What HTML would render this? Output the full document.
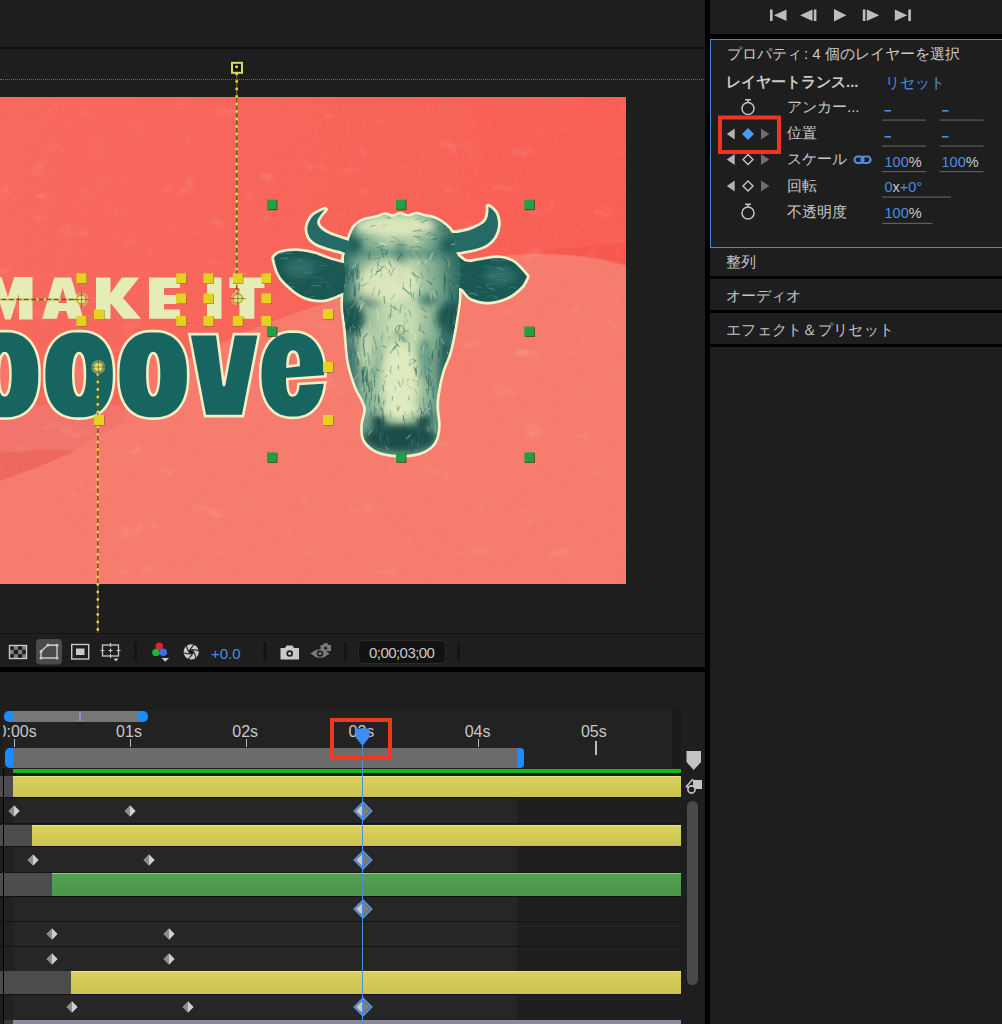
<!DOCTYPE html>
<html><head><meta charset="utf-8">
<style>
html,body{margin:0;padding:0}
body{width:1002px;height:1024px;background:#1e1e1e;position:relative;overflow:hidden;font-family:"Liberation Sans",sans-serif;color:#c4c4c4}
.a{position:absolute}
.blk{position:absolute;background:#000}
.t{position:absolute;white-space:nowrap;line-height:1}
</style></head><body>
<div class="blk" style="left:0;top:46.5px;width:705px;height:2.5px;background:#0e0e0e"></div>
<div class="blk" style="left:705px;top:0;width:5px;height:1024px;background:#000"></div>
<div class="blk" style="left:710px;top:34px;width:292px;height:5px;background:#000"></div>
<div class="a" style="left:0;top:79px;width:704px;height:0;border-top:1px dotted #6a6a6a"></div>
<div class="a" style="left:0;top:633px;width:705px;height:1px;background:#111"></div>
<div class="blk" style="left:0;top:667px;width:705px;height:5px"></div>
<div class="a" style="left:710px;top:39px;width:300px;height:208.5px;border:1.5px solid #4a86d4;box-sizing:border-box"></div>
<div class="blk" style="left:710px;top:276px;width:292px;height:3px"></div>
<div class="blk" style="left:710px;top:310px;width:292px;height:3px"></div>
<div class="blk" style="left:710px;top:344px;width:292px;height:3px"></div>
<svg class="a" style="left:0;top:97px" width="626" height="487" viewBox="0 97 626 487">
<defs><linearGradient id="bgTop" x1="0" y1="0" x2="1" y2="0"><stop offset="0" stop-color="#f8695d"/><stop offset="1" stop-color="#f85e54"/></linearGradient></defs>
<rect x="0" y="97" width="626" height="487" fill="#f67b6d"/>
<path d="M0 97 H626 V264 C600 258 570 252 527 254 C490 256 460 262 420 272 C380 284 340 298 270 322 C230 338 190 356 160 376 C130 396 100 430 75 451 C50 462 25 472 0 481 Z" fill="url(#bgTop)"/>
<path d="M0 405 H150 C130 420 100 432 75 451 L0 453 Z" fill="#f1736a"/>
<path d="M0 453 C25 450 50 449 75 451 C50 462 25 472 0 481 Z" fill="#ee675d"/>
<path d="M516 254 C560 248 600 246 626 242 V266 C600 258 560 252 516 254 Z" fill="#f5544c" opacity="0.6"/>
<filter id="grain" x="0" y="0" width="100%" height="100%"><feTurbulence type="fractalNoise" baseFrequency="0.8" numOctaves="2" seed="4" result="n"/><feColorMatrix in="n" type="matrix" values="0 0 0 0 1  0 0 0 0 1  0 0 0 0 1  1.2 0 0 0 -0.55"/></filter>
<filter id="blot" x="0" y="0" width="100%" height="100%"><feTurbulence type="fractalNoise" baseFrequency="0.035 0.05" numOctaves="4" seed="11" result="n"/><feColorMatrix in="n" type="matrix" values="0 0 0 0 1  0 0 0 0 0.95  0 0 0 0 0.85  4 0 0 0 -2.7"/></filter>
<rect x="0" y="97" width="626" height="487" filter="url(#grain)" opacity="0.10"/>
<rect x="0" y="97" width="626" height="487" filter="url(#blot)" opacity="0.12"/>
<g fill="#e6ecb6">
<path d="M-16.7 319.4 V277 H1.6 L7.9 297 L14.2 277 H32.5 V319.4 H19 V293.6 L10.7 319.4 H5.1 L-3.2 293.6 V319.4 Z"/>
<path fill-rule="evenodd" d="M42.1 318.8 L54.2 277.5 H71.2 L83.3 318.8 H68.6 L66.3 311 H59.1 L56.8 318.8 Z M62.7 288 L58.3 303 H67.1 Z"/>
<path d="M96 277.5 H110.5 V293.5 L121.7 277.5 H139.3 L123 298 L141 318.8 H123.4 L110.5 303 V318.8 H96 Z"/>
<path d="M149 277.5 H180 V288 H164 V295 H177 V304 H164 V309.5 H180 V318.8 H149 Z"/>
<rect x="207" y="277.5" width="14.5" height="41.3"/>
<path d="M229.4 277.5 H264.4 V288 H254.4 V318.8 H239.4 V288 H229.4 Z"/>
</g>
<g stroke="#f4efc4" stroke-width="2.6">
<path d="M39.60 374.80 L39.49 380.53 L39.16 384.98 L38.60 389.00 L37.83 392.71 L36.85 396.17 L35.65 399.38 L34.24 402.36 L32.63 405.11 L30.82 407.61 L28.82 409.88 L26.62 411.89 L24.24 413.65 L21.67 415.15 L18.91 416.39 L15.95 417.35 L12.74 418.04 L9.18 418.46 L4.60 418.60 L0.02 418.46 L-3.54 418.04 L-6.75 417.35 L-9.71 416.39 L-12.47 415.15 L-15.04 413.65 L-17.42 411.89 L-19.62 409.88 L-21.62 407.61 L-23.43 405.11 L-25.04 402.36 L-26.45 399.38 L-27.65 396.17 L-28.63 392.71 L-29.40 389.00 L-29.96 384.98 L-30.29 380.53 L-30.40 374.80 L-30.29 369.07 L-29.96 364.62 L-29.40 360.60 L-28.63 356.89 L-27.65 353.43 L-26.45 350.22 L-25.04 347.24 L-23.43 344.49 L-21.62 341.99 L-19.62 339.72 L-17.42 337.71 L-15.04 335.95 L-12.47 334.45 L-9.71 333.21 L-6.75 332.25 L-3.54 331.56 L0.02 331.14 L4.60 331.00 L9.18 331.14 L12.74 331.56 L15.95 332.25 L18.91 333.21 L21.67 334.45 L24.24 335.95 L26.62 337.71 L28.82 339.72 L30.82 341.99 L32.63 344.49 L34.24 347.24 L35.65 350.22 L36.85 353.43 L37.83 356.89 L38.60 360.60 L39.16 364.62 L39.49 369.07 Z" fill="#176561"/>
<path d="M10.40 374.20 L10.38 376.50 L10.32 378.50 L10.22 380.38 L10.08 382.16 L9.90 383.84 L9.69 385.44 L9.44 386.93 L9.15 388.32 L8.83 389.60 L8.48 390.76 L8.10 391.80 L7.69 392.71 L7.25 393.49 L6.79 394.14 L6.30 394.65 L5.78 395.01 L5.23 395.23 L4.60 395.30 L3.97 395.23 L3.42 395.01 L2.90 394.65 L2.41 394.14 L1.95 393.49 L1.51 392.71 L1.10 391.80 L0.72 390.76 L0.37 389.60 L0.05 388.32 L-0.24 386.93 L-0.49 385.44 L-0.70 383.84 L-0.88 382.16 L-1.02 380.38 L-1.12 378.50 L-1.18 376.50 L-1.20 374.20 L-1.18 371.90 L-1.12 369.90 L-1.02 368.02 L-0.88 366.24 L-0.70 364.56 L-0.49 362.96 L-0.24 361.47 L0.05 360.08 L0.37 358.80 L0.72 357.64 L1.10 356.60 L1.51 355.69 L1.95 354.91 L2.41 354.26 L2.90 353.75 L3.42 353.39 L3.97 353.17 L4.60 353.10 L5.23 353.17 L5.78 353.39 L6.30 353.75 L6.79 354.26 L7.25 354.91 L7.69 355.69 L8.10 356.60 L8.48 357.64 L8.83 358.80 L9.15 360.08 L9.44 361.47 L9.69 362.96 L9.90 364.56 L10.08 366.24 L10.22 368.02 L10.32 369.90 L10.38 371.90 Z" fill="#f7786a"/>
<path d="M114.10 374.80 L113.99 380.53 L113.66 384.98 L113.10 389.00 L112.33 392.71 L111.35 396.17 L110.15 399.38 L108.74 402.36 L107.13 405.11 L105.32 407.61 L103.32 409.88 L101.12 411.89 L98.74 413.65 L96.17 415.15 L93.41 416.39 L90.45 417.35 L87.24 418.04 L83.68 418.46 L79.10 418.60 L74.52 418.46 L70.96 418.04 L67.75 417.35 L64.79 416.39 L62.03 415.15 L59.46 413.65 L57.08 411.89 L54.88 409.88 L52.88 407.61 L51.07 405.11 L49.46 402.36 L48.05 399.38 L46.85 396.17 L45.87 392.71 L45.10 389.00 L44.54 384.98 L44.21 380.53 L44.10 374.80 L44.21 369.07 L44.54 364.62 L45.10 360.60 L45.87 356.89 L46.85 353.43 L48.05 350.22 L49.46 347.24 L51.07 344.49 L52.88 341.99 L54.88 339.72 L57.08 337.71 L59.46 335.95 L62.03 334.45 L64.79 333.21 L67.75 332.25 L70.96 331.56 L74.52 331.14 L79.10 331.00 L83.68 331.14 L87.24 331.56 L90.45 332.25 L93.41 333.21 L96.17 334.45 L98.74 335.95 L101.12 337.71 L103.32 339.72 L105.32 341.99 L107.13 344.49 L108.74 347.24 L110.15 350.22 L111.35 353.43 L112.33 356.89 L113.10 360.60 L113.66 364.62 L113.99 369.07 Z" fill="#176561"/>
<path d="M84.90 374.20 L84.88 376.50 L84.82 378.50 L84.72 380.38 L84.58 382.16 L84.40 383.84 L84.19 385.44 L83.94 386.93 L83.65 388.32 L83.33 389.60 L82.98 390.76 L82.60 391.80 L82.19 392.71 L81.75 393.49 L81.29 394.14 L80.80 394.65 L80.28 395.01 L79.73 395.23 L79.10 395.30 L78.47 395.23 L77.92 395.01 L77.40 394.65 L76.91 394.14 L76.45 393.49 L76.01 392.71 L75.60 391.80 L75.22 390.76 L74.87 389.60 L74.55 388.32 L74.26 386.93 L74.01 385.44 L73.80 383.84 L73.62 382.16 L73.48 380.38 L73.38 378.50 L73.32 376.50 L73.30 374.20 L73.32 371.90 L73.38 369.90 L73.48 368.02 L73.62 366.24 L73.80 364.56 L74.01 362.96 L74.26 361.47 L74.55 360.08 L74.87 358.80 L75.22 357.64 L75.60 356.60 L76.01 355.69 L76.45 354.91 L76.91 354.26 L77.40 353.75 L77.92 353.39 L78.47 353.17 L79.10 353.10 L79.73 353.17 L80.28 353.39 L80.80 353.75 L81.29 354.26 L81.75 354.91 L82.19 355.69 L82.60 356.60 L82.98 357.64 L83.33 358.80 L83.65 360.08 L83.94 361.47 L84.19 362.96 L84.40 364.56 L84.58 366.24 L84.72 368.02 L84.82 369.90 L84.88 371.90 Z" fill="#f7786a"/>
<path d="M188.20 374.80 L188.09 380.53 L187.76 384.98 L187.20 389.00 L186.43 392.71 L185.45 396.17 L184.25 399.38 L182.84 402.36 L181.23 405.11 L179.42 407.61 L177.42 409.88 L175.22 411.89 L172.84 413.65 L170.27 415.15 L167.51 416.39 L164.55 417.35 L161.34 418.04 L157.78 418.46 L153.20 418.60 L148.62 418.46 L145.06 418.04 L141.85 417.35 L138.89 416.39 L136.13 415.15 L133.56 413.65 L131.18 411.89 L128.98 409.88 L126.98 407.61 L125.17 405.11 L123.56 402.36 L122.15 399.38 L120.95 396.17 L119.97 392.71 L119.20 389.00 L118.64 384.98 L118.31 380.53 L118.20 374.80 L118.31 369.07 L118.64 364.62 L119.20 360.60 L119.97 356.89 L120.95 353.43 L122.15 350.22 L123.56 347.24 L125.17 344.49 L126.98 341.99 L128.98 339.72 L131.18 337.71 L133.56 335.95 L136.13 334.45 L138.89 333.21 L141.85 332.25 L145.06 331.56 L148.62 331.14 L153.20 331.00 L157.78 331.14 L161.34 331.56 L164.55 332.25 L167.51 333.21 L170.27 334.45 L172.84 335.95 L175.22 337.71 L177.42 339.72 L179.42 341.99 L181.23 344.49 L182.84 347.24 L184.25 350.22 L185.45 353.43 L186.43 356.89 L187.20 360.60 L187.76 364.62 L188.09 369.07 Z" fill="#176561"/>
<path d="M159.00 374.20 L158.98 376.50 L158.92 378.50 L158.82 380.38 L158.68 382.16 L158.50 383.84 L158.29 385.44 L158.04 386.93 L157.75 388.32 L157.43 389.60 L157.08 390.76 L156.70 391.80 L156.29 392.71 L155.85 393.49 L155.39 394.14 L154.90 394.65 L154.38 395.01 L153.83 395.23 L153.20 395.30 L152.57 395.23 L152.02 395.01 L151.50 394.65 L151.01 394.14 L150.55 393.49 L150.11 392.71 L149.70 391.80 L149.32 390.76 L148.97 389.60 L148.65 388.32 L148.36 386.93 L148.11 385.44 L147.90 383.84 L147.72 382.16 L147.58 380.38 L147.48 378.50 L147.42 376.50 L147.40 374.20 L147.42 371.90 L147.48 369.90 L147.58 368.02 L147.72 366.24 L147.90 364.56 L148.11 362.96 L148.36 361.47 L148.65 360.08 L148.97 358.80 L149.32 357.64 L149.70 356.60 L150.11 355.69 L150.55 354.91 L151.01 354.26 L151.50 353.75 L152.02 353.39 L152.57 353.17 L153.20 353.10 L153.83 353.17 L154.38 353.39 L154.90 353.75 L155.39 354.26 L155.85 354.91 L156.29 355.69 L156.70 356.60 L157.08 357.64 L157.43 358.80 L157.75 360.08 L158.04 361.47 L158.29 362.96 L158.50 364.56 L158.68 366.24 L158.82 368.02 L158.92 369.90 L158.98 371.90 Z" fill="#f7786a"/>
<path d="M189.3 334.1 H217.2 L223.9 386 L233.8 334.1 H259 L243 416.1 H205 Z" fill="#176561"/>
<path d="M325.40 374.70 L325.29 379.88 L324.97 384.13 L324.43 388.04 L323.68 391.69 L322.73 395.13 L321.57 398.34 L320.21 401.34 L318.66 404.12 L316.92 406.66 L315.00 408.96 L312.90 411.02 L310.64 412.82 L308.22 414.36 L305.62 415.63 L302.86 416.62 L299.91 417.33 L296.71 417.76 L292.80 417.90 L288.89 417.76 L285.69 417.33 L282.74 416.62 L279.98 415.63 L277.38 414.36 L274.96 412.82 L272.70 411.02 L270.60 408.96 L268.68 406.66 L266.94 404.12 L265.39 401.34 L264.03 398.34 L262.87 395.13 L261.92 391.69 L261.17 388.04 L260.63 384.13 L260.31 379.88 L260.20 374.70 L260.31 369.52 L260.63 365.27 L261.17 361.36 L261.92 357.71 L262.87 354.27 L264.03 351.06 L265.39 348.06 L266.94 345.28 L268.68 342.74 L270.60 340.44 L272.70 338.38 L274.96 336.58 L277.38 335.04 L279.98 333.77 L282.74 332.78 L285.69 332.07 L288.89 331.64 L292.80 331.50 L296.71 331.64 L299.91 332.07 L302.86 332.78 L305.62 333.77 L308.22 335.04 L310.64 336.58 L312.90 338.38 L315.00 340.44 L316.92 342.74 L318.66 345.28 L320.21 348.06 L321.57 351.06 L322.73 354.27 L323.68 357.71 L324.43 361.36 L324.97 365.27 L325.29 369.52 Z" fill="#176561"/>
<path d="M287.5 366.5 C287.5 356 290 351.6 293 351.6 C296.2 351.6 298.6 356 298.6 365 Z" fill="#f7786a"/>
</g>
<clipPath id="eclip"><path d="M326.80 374.70 L326.69 380.03 L326.35 384.41 L325.79 388.44 L325.01 392.21 L324.01 395.74 L322.80 399.06 L321.39 402.14 L319.77 405.00 L317.95 407.62 L315.95 409.99 L313.77 412.11 L311.41 413.97 L308.88 415.55 L306.18 416.86 L303.30 417.88 L300.22 418.61 L296.87 419.05 L292.80 419.20 L288.73 419.05 L285.38 418.61 L282.30 417.88 L279.42 416.86 L276.72 415.55 L274.19 413.97 L271.83 412.11 L269.65 409.99 L267.65 407.62 L265.83 405.00 L264.21 402.14 L262.80 399.06 L261.59 395.74 L260.59 392.21 L259.81 388.44 L259.25 384.41 L258.91 380.03 L258.80 374.70 L258.91 369.37 L259.25 364.99 L259.81 360.96 L260.59 357.19 L261.59 353.66 L262.80 350.34 L264.21 347.26 L265.83 344.40 L267.65 341.78 L269.65 339.41 L271.83 337.29 L274.19 335.43 L276.72 333.85 L279.42 332.54 L282.30 331.52 L285.38 330.79 L288.73 330.35 L292.80 330.20 L296.87 330.35 L300.22 330.79 L303.30 331.52 L306.18 332.54 L308.88 333.85 L311.41 335.43 L313.77 337.29 L315.95 339.41 L317.95 341.78 L319.77 344.40 L321.39 347.26 L322.80 350.34 L324.01 353.66 L325.01 357.19 L325.79 360.96 L326.35 364.99 L326.69 369.37 Z"/></clipPath>
<path clip-path="url(#eclip)" d="M287.3 379 L330 376 V382 L298.5 384 C298 392 295.5 395.5 292.5 395.5 C289 395.5 287.3 390 287.3 379 Z" fill="#f7786a" stroke="#f4efc4" stroke-width="2.6"/>
</svg>
<svg class="a" style="left:260px;top:195px" width="280" height="270" viewBox="260 195 280 270">
<defs><filter id="bl" x="-50%" y="-50%" width="200%" height="200%"><feGaussianBlur stdDeviation="3.5"/></filter><filter id="bl2" x="-50%" y="-50%" width="200%" height="200%"><feGaussianBlur stdDeviation="1.5"/></filter><clipPath id="fclip"><path d="M348.5 250.0 C357.5 244.0 382.5 240.0 400.0 240.0 C417.5 240.0 443.8 241.8 453.6 250.0 C463.4 258.2 458.6 278.2 459.0 289.3 C459.4 300.4 457.8 306.2 456.3 316.3 C454.8 326.4 452.4 340.7 450.0 350.0 C447.6 359.3 444.2 364.3 442.0 372.0 C439.8 379.7 437.9 389.7 437.0 396.0 C436.1 402.3 436.3 405.2 436.5 410.0 C436.7 414.8 438.1 420.3 438.0 425.0 C437.9 429.7 437.3 434.3 436.0 438.0 C434.7 441.7 433.0 444.5 430.0 447.0 C427.0 449.5 423.0 451.7 418.0 453.0 C413.0 454.3 406.0 455.1 400.0 455.0 C394.0 454.9 386.8 453.8 382.0 452.5 C377.2 451.2 374.0 449.4 371.0 447.0 C368.0 444.6 365.3 441.7 364.0 438.0 C362.7 434.3 362.7 429.7 363.0 425.0 C363.3 420.3 366.0 414.2 366.0 410.0 C366.0 405.8 364.7 404.0 363.0 400.0 C361.3 396.0 358.3 392.3 356.0 386.0 C353.7 379.7 350.7 371.4 349.0 362.0 C347.3 352.6 346.8 339.6 345.8 329.7 C344.8 319.8 343.0 311.8 343.0 302.8 C343.0 293.8 344.9 284.6 345.8 275.8 C346.7 267.0 339.5 256.0 348.5 250.0 Z"/><path d="M349.0 244.0 C347.8 240.0 351.5 233.1 353.0 229.8 C354.5 226.5 356.2 225.6 358.0 224.0 C359.8 222.4 361.8 221.3 364.0 220.5 C366.2 219.7 368.7 219.5 371.0 219.0 C373.3 218.5 375.7 218.2 378.0 217.5 C380.3 216.8 382.5 215.1 385.0 215.0 C387.5 214.9 390.5 217.1 393.0 217.0 C395.5 216.9 397.5 214.5 400.0 214.5 C402.5 214.5 405.3 217.0 408.0 217.0 C410.7 217.0 413.3 214.6 416.0 214.5 C418.7 214.4 421.3 215.9 424.0 216.5 C426.7 217.1 429.3 217.2 432.0 218.0 C434.7 218.8 437.5 220.0 440.0 221.5 C442.5 223.0 445.2 225.2 447.0 227.0 C448.8 228.8 449.7 229.2 451.0 232.0 C452.3 234.8 456.8 240.3 455.0 244.0 C453.2 247.7 449.2 252.7 440.0 254.0 C430.8 255.3 413.3 252.0 400.0 252.0 C386.7 252.0 368.5 255.3 360.0 254.0 C351.5 252.7 350.2 248.0 349.0 244.0 Z"/></clipPath><clipPath id="lclip"><path d="M350.4 264.5 C349.2 260.3 346.4 263.9 342.7 263.0 C339.0 262.1 333.4 260.6 328.4 259.0 C323.4 257.4 318.2 254.8 312.8 253.5 C307.4 252.2 301.5 251.1 296.0 251.0 C290.5 250.9 283.7 251.8 280.0 253.0 C276.3 254.2 274.0 258.0 274.0 258.0 C274.0 258.0 276.1 267.9 278.0 272.0 C279.9 276.1 281.5 278.9 285.6 282.8 C289.7 286.8 296.3 292.9 302.4 295.7 C308.5 298.5 315.7 300.1 322.0 299.8 C328.3 299.5 335.3 296.0 340.0 294.0 C344.7 292.0 348.3 292.9 350.0 288.0 C351.7 283.1 351.6 268.7 350.4 264.5 Z"/></clipPath><clipPath id="rclip"><path d="M452.0 254.0 C454.0 250.3 461.3 260.5 465.9 261.6 C470.5 262.7 474.3 261.0 479.7 260.4 C485.1 259.8 492.6 257.9 498.0 258.1 C503.4 258.3 508.0 259.7 511.8 261.6 C515.6 263.5 518.5 267.1 521.0 269.6 C523.5 272.1 527.0 276.5 527.0 276.5 C527.0 276.5 524.3 283.4 521.0 286.8 C517.7 290.2 512.5 294.6 507.2 297.1 C501.8 299.6 494.8 301.5 488.9 301.7 C483.0 301.9 476.0 300.4 471.6 298.3 C467.2 296.2 465.4 291.5 462.5 289.1 C459.6 286.7 455.8 289.9 454.0 284.0 C452.2 278.1 450.0 257.7 452.0 254.0 Z"/></clipPath></defs>
<g fill="#eef0c8" stroke="#eef0c8" stroke-width="5.5" stroke-linejoin="round">
<path d="M325.0 209.5 C325.0 209.5 316.4 212.8 313.5 215.5 C310.6 218.2 308.4 222.5 307.6 226.0 C306.9 229.5 307.7 233.5 309.0 236.3 C310.3 239.1 312.2 240.9 315.4 242.8 C318.6 244.8 323.8 246.5 328.4 248.0 C332.9 249.5 338.7 250.3 342.7 251.9 C346.7 253.5 350.3 257.8 352.5 257.5 C354.7 257.2 355.9 252.4 356.0 250.0 C356.1 247.6 355.2 244.7 353.0 242.8 C350.8 241.0 346.8 240.4 342.7 238.9 C338.6 237.4 332.3 235.6 328.4 233.7 C324.5 231.8 321.1 229.5 319.3 227.2 C317.5 224.9 316.6 222.9 317.5 220.0 C318.4 217.1 325.0 209.5 325.0 209.5 Z"/>
<path d="M488.5 206.5 C488.5 206.5 494.1 210.3 495.7 213.4 C497.3 216.5 498.2 221.0 498.0 224.8 C497.8 228.6 496.5 233.0 494.6 236.3 C492.7 239.6 489.9 242.3 486.6 244.4 C483.3 246.5 478.8 247.8 475.0 248.9 C471.2 250.0 467.0 250.6 463.6 251.2 C460.2 251.8 457.7 252.6 454.4 252.4 C451.1 252.2 445.1 253.1 444.0 250.0 C442.9 246.9 445.2 236.8 447.5 234.0 C449.8 231.2 453.9 233.7 457.9 232.9 C461.9 232.1 467.2 231.1 471.6 229.4 C476.0 227.7 481.6 224.9 484.3 222.5 C487.0 220.1 487.3 217.7 488.0 215.0 C488.7 212.3 488.5 206.5 488.5 206.5 Z"/>
<path d="M350.4 264.5 C349.2 260.3 346.4 263.9 342.7 263.0 C339.0 262.1 333.4 260.6 328.4 259.0 C323.4 257.4 318.2 254.8 312.8 253.5 C307.4 252.2 301.5 251.1 296.0 251.0 C290.5 250.9 283.7 251.8 280.0 253.0 C276.3 254.2 274.0 258.0 274.0 258.0 C274.0 258.0 276.1 267.9 278.0 272.0 C279.9 276.1 281.5 278.9 285.6 282.8 C289.7 286.8 296.3 292.9 302.4 295.7 C308.5 298.5 315.7 300.1 322.0 299.8 C328.3 299.5 335.3 296.0 340.0 294.0 C344.7 292.0 348.3 292.9 350.0 288.0 C351.7 283.1 351.6 268.7 350.4 264.5 Z"/>
<path d="M452.0 254.0 C454.0 250.3 461.3 260.5 465.9 261.6 C470.5 262.7 474.3 261.0 479.7 260.4 C485.1 259.8 492.6 257.9 498.0 258.1 C503.4 258.3 508.0 259.7 511.8 261.6 C515.6 263.5 518.5 267.1 521.0 269.6 C523.5 272.1 527.0 276.5 527.0 276.5 C527.0 276.5 524.3 283.4 521.0 286.8 C517.7 290.2 512.5 294.6 507.2 297.1 C501.8 299.6 494.8 301.5 488.9 301.7 C483.0 301.9 476.0 300.4 471.6 298.3 C467.2 296.2 465.4 291.5 462.5 289.1 C459.6 286.7 455.8 289.9 454.0 284.0 C452.2 278.1 450.0 257.7 452.0 254.0 Z"/>
<path d="M349.0 244.0 C347.8 240.0 351.5 233.1 353.0 229.8 C354.5 226.5 356.2 225.6 358.0 224.0 C359.8 222.4 361.8 221.3 364.0 220.5 C366.2 219.7 368.7 219.5 371.0 219.0 C373.3 218.5 375.7 218.2 378.0 217.5 C380.3 216.8 382.5 215.1 385.0 215.0 C387.5 214.9 390.5 217.1 393.0 217.0 C395.5 216.9 397.5 214.5 400.0 214.5 C402.5 214.5 405.3 217.0 408.0 217.0 C410.7 217.0 413.3 214.6 416.0 214.5 C418.7 214.4 421.3 215.9 424.0 216.5 C426.7 217.1 429.3 217.2 432.0 218.0 C434.7 218.8 437.5 220.0 440.0 221.5 C442.5 223.0 445.2 225.2 447.0 227.0 C448.8 228.8 449.7 229.2 451.0 232.0 C452.3 234.8 456.8 240.3 455.0 244.0 C453.2 247.7 449.2 252.7 440.0 254.0 C430.8 255.3 413.3 252.0 400.0 252.0 C386.7 252.0 368.5 255.3 360.0 254.0 C351.5 252.7 350.2 248.0 349.0 244.0 Z"/>
<path d="M348.5 250.0 C357.5 244.0 382.5 240.0 400.0 240.0 C417.5 240.0 443.8 241.8 453.6 250.0 C463.4 258.2 458.6 278.2 459.0 289.3 C459.4 300.4 457.8 306.2 456.3 316.3 C454.8 326.4 452.4 340.7 450.0 350.0 C447.6 359.3 444.2 364.3 442.0 372.0 C439.8 379.7 437.9 389.7 437.0 396.0 C436.1 402.3 436.3 405.2 436.5 410.0 C436.7 414.8 438.1 420.3 438.0 425.0 C437.9 429.7 437.3 434.3 436.0 438.0 C434.7 441.7 433.0 444.5 430.0 447.0 C427.0 449.5 423.0 451.7 418.0 453.0 C413.0 454.3 406.0 455.1 400.0 455.0 C394.0 454.9 386.8 453.8 382.0 452.5 C377.2 451.2 374.0 449.4 371.0 447.0 C368.0 444.6 365.3 441.7 364.0 438.0 C362.7 434.3 362.7 429.7 363.0 425.0 C363.3 420.3 366.0 414.2 366.0 410.0 C366.0 405.8 364.7 404.0 363.0 400.0 C361.3 396.0 358.3 392.3 356.0 386.0 C353.7 379.7 350.7 371.4 349.0 362.0 C347.3 352.6 346.8 339.6 345.8 329.7 C344.8 319.8 343.0 311.8 343.0 302.8 C343.0 293.8 344.9 284.6 345.8 275.8 C346.7 267.0 339.5 256.0 348.5 250.0 Z"/>
</g>
<g clip-path="url(#lclip)"></g>
<path d="M325.0 209.5 C325.0 209.5 316.4 212.8 313.5 215.5 C310.6 218.2 308.4 222.5 307.6 226.0 C306.9 229.5 307.7 233.5 309.0 236.3 C310.3 239.1 312.2 240.9 315.4 242.8 C318.6 244.8 323.8 246.5 328.4 248.0 C332.9 249.5 338.7 250.3 342.7 251.9 C346.7 253.5 350.3 257.8 352.5 257.5 C354.7 257.2 355.9 252.4 356.0 250.0 C356.1 247.6 355.2 244.7 353.0 242.8 C350.8 241.0 346.8 240.4 342.7 238.9 C338.6 237.4 332.3 235.6 328.4 233.7 C324.5 231.8 321.1 229.5 319.3 227.2 C317.5 224.9 316.6 222.9 317.5 220.0 C318.4 217.1 325.0 209.5 325.0 209.5 Z" fill="#266a66"/>
<path d="M488.5 206.5 C488.5 206.5 494.1 210.3 495.7 213.4 C497.3 216.5 498.2 221.0 498.0 224.8 C497.8 228.6 496.5 233.0 494.6 236.3 C492.7 239.6 489.9 242.3 486.6 244.4 C483.3 246.5 478.8 247.8 475.0 248.9 C471.2 250.0 467.0 250.6 463.6 251.2 C460.2 251.8 457.7 252.6 454.4 252.4 C451.1 252.2 445.1 253.1 444.0 250.0 C442.9 246.9 445.2 236.8 447.5 234.0 C449.8 231.2 453.9 233.7 457.9 232.9 C461.9 232.1 467.2 231.1 471.6 229.4 C476.0 227.7 481.6 224.9 484.3 222.5 C487.0 220.1 487.3 217.7 488.0 215.0 C488.7 212.3 488.5 206.5 488.5 206.5 Z" fill="#266a66"/>
<path d="M350.4 264.5 C349.2 260.3 346.4 263.9 342.7 263.0 C339.0 262.1 333.4 260.6 328.4 259.0 C323.4 257.4 318.2 254.8 312.8 253.5 C307.4 252.2 301.5 251.1 296.0 251.0 C290.5 250.9 283.7 251.8 280.0 253.0 C276.3 254.2 274.0 258.0 274.0 258.0 C274.0 258.0 276.1 267.9 278.0 272.0 C279.9 276.1 281.5 278.9 285.6 282.8 C289.7 286.8 296.3 292.9 302.4 295.7 C308.5 298.5 315.7 300.1 322.0 299.8 C328.3 299.5 335.3 296.0 340.0 294.0 C344.7 292.0 348.3 292.9 350.0 288.0 C351.7 283.1 351.6 268.7 350.4 264.5 Z" fill="#1b5753"/>
<path d="M452.0 254.0 C454.0 250.3 461.3 260.5 465.9 261.6 C470.5 262.7 474.3 261.0 479.7 260.4 C485.1 259.8 492.6 257.9 498.0 258.1 C503.4 258.3 508.0 259.7 511.8 261.6 C515.6 263.5 518.5 267.1 521.0 269.6 C523.5 272.1 527.0 276.5 527.0 276.5 C527.0 276.5 524.3 283.4 521.0 286.8 C517.7 290.2 512.5 294.6 507.2 297.1 C501.8 299.6 494.8 301.5 488.9 301.7 C483.0 301.9 476.0 300.4 471.6 298.3 C467.2 296.2 465.4 291.5 462.5 289.1 C459.6 286.7 455.8 289.9 454.0 284.0 C452.2 278.1 450.0 257.7 452.0 254.0 Z" fill="#1b5753"/>
<g clip-path="url(#lclip)" filter="url(#bl)"><ellipse cx="300" cy="268" rx="16" ry="9" fill="#2d6e67"/></g>
<g clip-path="url(#rclip)" filter="url(#bl)"><ellipse cx="500" cy="276" rx="16" ry="9" fill="#2d6e67"/></g>
<g clip-path="url(#fclip)">
<defs><radialGradient id="fg" cx="0.5" cy="0.45" r="0.6"><stop offset="0" stop-color="#ccdfb2"/><stop offset="0.55" stop-color="#a8c9a4"/><stop offset="1" stop-color="#4f8c7e"/></radialGradient></defs>
<rect x="330" y="205" width="140" height="260" fill="url(#fg)"/>
<defs><linearGradient id="sideg" x1="343" y1="0" x2="459" y2="0" gradientUnits="userSpaceOnUse"><stop offset="0" stop-color="#1f5c57" stop-opacity="0.8"/><stop offset="0.15" stop-color="#3a766c" stop-opacity="0.25"/><stop offset="0.4" stop-color="#3a766c" stop-opacity="0"/><stop offset="0.62" stop-color="#3a766c" stop-opacity="0"/><stop offset="0.82" stop-color="#2f6e66" stop-opacity="0.4"/><stop offset="1" stop-color="#1f5c57" stop-opacity="0.85"/></linearGradient></defs>
<rect x="330" y="215" width="140" height="250" fill="url(#sideg)"/>
<g filter="url(#bl)">
<rect x="352" y="248" width="96" height="10" fill="#3c7a70" opacity="0.55"/>
<ellipse cx="352" cy="245" rx="10" ry="9" fill="#1f5c57" opacity="0.9"/>
<ellipse cx="449" cy="245" rx="10" ry="9" fill="#1f5c57" opacity="0.9"/>
<ellipse cx="400" cy="262" rx="5" ry="24" fill="#3b7a70" opacity="0.6"/>
<ellipse cx="350" cy="318" rx="14" ry="16" fill="#1b5550" opacity="1"/>
<ellipse cx="451" cy="318" rx="14" ry="16" fill="#1b5550" opacity="1"/>
<ellipse cx="372" cy="300" rx="10" ry="6" fill="#2f6e66" opacity="0.7"/>
<ellipse cx="428" cy="300" rx="10" ry="6" fill="#2f6e66" opacity="0.7"/>
<ellipse cx="352" cy="370" rx="7" ry="30" fill="#2f6e66" opacity="0.55"/>
<ellipse cx="446" cy="368" rx="8" ry="36" fill="#1f5c57" opacity="0.8"/>
<ellipse cx="425" cy="360" rx="8" ry="22" fill="#4d8a7c" opacity="0.6"/>
<ellipse cx="375" cy="360" rx="6" ry="20" fill="#5d9686" opacity="0.5"/>
<ellipse cx="400" cy="438" rx="36" ry="14" fill="#1a4c48" opacity="1"/>
<ellipse cx="378" cy="421" rx="7" ry="6" fill="#153f3c" opacity="1"/>
<ellipse cx="424" cy="421" rx="7" ry="6" fill="#153f3c" opacity="1"/>
<ellipse cx="400" cy="342" rx="8" ry="10" fill="#5f9a88" opacity="0.55"/>
<ellipse cx="395" cy="226" rx="40" ry="11" fill="#e0eabd" opacity="0.9"/>
<ellipse cx="388" cy="282" rx="30" ry="20" fill="#e0eabd" opacity="0.85"/>
<ellipse cx="400" cy="380" rx="18" ry="40" fill="#e3ecc0" opacity="0.9"/>
<ellipse cx="401" cy="410" rx="22" ry="5" fill="#e3ecc0" opacity="0.95"/>
<ellipse cx="368" cy="350" rx="7" ry="20" fill="#d6e4b6" opacity="0.7"/>
</g>
<g stroke-linecap="round"><path d="M379.5 248.8 l6.7 1.5" stroke="#2a6a64" stroke-width="0.86" opacity="0.57"/><path d="M366.2 233.0 l5.5 0.2" stroke="#e4f0cc" stroke-width="0.77" opacity="0.27"/><path d="M409.0 443.2 l-0.7 6.7" stroke="#2a6a64" stroke-width="1.01" opacity="0.59"/><path d="M345.7 421.5 l-1.9 4.3" stroke="#2a6a64" stroke-width="0.70" opacity="0.45"/><path d="M408.4 378.4 l-0.9 3.5" stroke="#2a6a64" stroke-width="0.67" opacity="0.45"/><path d="M415.5 333.1 l-0.3 6.2" stroke="#e4f0cc" stroke-width="1.14" opacity="0.45"/><path d="M395.3 285.1 l-1.1 7.7" stroke="#e4f0cc" stroke-width="1.00" opacity="0.56"/><path d="M429.0 282.3 l-1.6 8.7" stroke="#e4f0cc" stroke-width="0.68" opacity="0.31"/><path d="M381.7 439.7 l0.5 5.5" stroke="#3c7c72" stroke-width="0.99" opacity="0.37"/><path d="M382.7 333.2 l-1.2 7.7" stroke="#2a6a64" stroke-width="0.65" opacity="0.58"/><path d="M397.8 374.1 l-0.8 3.3" stroke="#e4f0cc" stroke-width="1.30" opacity="0.35"/><path d="M387.1 375.2 l-2.2 2.3" stroke="#1f5c57" stroke-width="0.92" opacity="0.46"/><path d="M400.2 265.2 l-0.2 4.7" stroke="#e4f0cc" stroke-width="1.24" opacity="0.28"/><path d="M394.8 346.1 l-4.2 7.1" stroke="#3c7c72" stroke-width="1.17" opacity="0.50"/><path d="M460.3 378.6 l2.0 4.9" stroke="#1f5c57" stroke-width="0.71" opacity="0.25"/><path d="M441.4 256.5 l2.1 4.2" stroke="#3c7c72" stroke-width="0.70" opacity="0.46"/><path d="M378.9 242.6 l7.8 2.3" stroke="#e4f0cc" stroke-width="1.12" opacity="0.56"/><path d="M435.2 425.4 l-0.1 7.8" stroke="#e4f0cc" stroke-width="0.87" opacity="0.39"/><path d="M398.7 309.7 l2.1 3.6" stroke="#2a6a64" stroke-width="0.68" opacity="0.29"/><path d="M409.1 342.9 l0.0 8.7" stroke="#2a6a64" stroke-width="1.03" opacity="0.56"/><path d="M414.9 248.2 l4.5 -0.4" stroke="#e4f0cc" stroke-width="0.69" opacity="0.60"/><path d="M396.9 330.1 l1.3 3.3" stroke="#3c7c72" stroke-width="0.67" opacity="0.51"/><path d="M398.4 380.9 l2.0 5.8" stroke="#2a6a64" stroke-width="0.85" opacity="0.52"/><path d="M376.4 368.9 l3.1 1.8" stroke="#3c7c72" stroke-width="1.19" opacity="0.57"/><path d="M383.4 266.4 l-4.5 4.3" stroke="#1f5c57" stroke-width="1.03" opacity="0.53"/><path d="M439.8 392.5 l1.0 4.2" stroke="#3c7c72" stroke-width="0.96" opacity="0.51"/><path d="M460.7 404.8 l3.3 4.8" stroke="#3c7c72" stroke-width="0.84" opacity="0.58"/><path d="M384.5 265.8 l2.3 3.7" stroke="#1f5c57" stroke-width="0.74" opacity="0.42"/><path d="M460.2 360.9 l2.0 2.2" stroke="#2a6a64" stroke-width="1.05" opacity="0.57"/><path d="M435.4 395.0 l-0.2 5.9" stroke="#3c7c72" stroke-width="0.72" opacity="0.28"/><path d="M455.4 388.1 l1.8 5.5" stroke="#1f5c57" stroke-width="0.71" opacity="0.26"/><path d="M412.1 325.5 l-1.0 6.9" stroke="#e4f0cc" stroke-width="1.03" opacity="0.48"/><path d="M382.7 345.9 l3.6 1.3" stroke="#1f5c57" stroke-width="1.05" opacity="0.40"/><path d="M446.4 413.6 l1.6 3.9" stroke="#3c7c72" stroke-width="0.78" opacity="0.43"/><path d="M433.2 291.5 l1.8 6.0" stroke="#e4f0cc" stroke-width="1.12" opacity="0.48"/><path d="M439.4 338.1 l0.7 7.9" stroke="#1f5c57" stroke-width="1.21" opacity="0.44"/><path d="M403.9 216.6 l5.6 0.1" stroke="#1f5c57" stroke-width="1.16" opacity="0.30"/><path d="M415.5 241.4 l3.4 0.2" stroke="#e4f0cc" stroke-width="1.08" opacity="0.52"/><path d="M352.9 348.7 l-1.9 4.1" stroke="#2a6a64" stroke-width="0.96" opacity="0.52"/><path d="M451.3 320.2 l6.1 2.7" stroke="#1f5c57" stroke-width="0.95" opacity="0.49"/><path d="M395.2 342.1 l3.8 4.5" stroke="#3c7c72" stroke-width="1.21" opacity="0.57"/><path d="M448.9 261.4 l0.1 5.7" stroke="#e4f0cc" stroke-width="0.89" opacity="0.40"/><path d="M348.9 270.7 l-2.3 2.6" stroke="#1f5c57" stroke-width="1.23" opacity="0.58"/><path d="M418.5 301.3 l-2.8 3.6" stroke="#e4f0cc" stroke-width="0.70" opacity="0.33"/><path d="M456.2 309.2 l5.7 1.7" stroke="#e4f0cc" stroke-width="0.71" opacity="0.60"/><path d="M389.3 314.8 l-0.6 5.1" stroke="#3c7c72" stroke-width="0.66" opacity="0.26"/><path d="M407.6 319.5 l-0.9 3.0" stroke="#2a6a64" stroke-width="0.96" opacity="0.29"/><path d="M452.1 267.8 l6.6 5.0" stroke="#3c7c72" stroke-width="0.66" opacity="0.26"/><path d="M435.0 278.0 l-2.6 2.7" stroke="#3c7c72" stroke-width="1.17" opacity="0.39"/><path d="M405.5 337.6 l3.1 5.1" stroke="#3c7c72" stroke-width="0.83" opacity="0.27"/><path d="M424.0 315.8 l2.5 2.4" stroke="#2a6a64" stroke-width="1.16" opacity="0.46"/><path d="M367.1 276.5 l-1.7 3.3" stroke="#e4f0cc" stroke-width="0.61" opacity="0.57"/><path d="M372.7 243.5 l6.1 -0.5" stroke="#2a6a64" stroke-width="0.71" opacity="0.31"/><path d="M453.7 365.4 l3.3 5.2" stroke="#e4f0cc" stroke-width="0.74" opacity="0.43"/><path d="M361.7 296.7 l-0.7 3.0" stroke="#1f5c57" stroke-width="1.11" opacity="0.43"/><path d="M370.0 321.1 l-0.6 6.9" stroke="#e4f0cc" stroke-width="1.06" opacity="0.44"/><path d="M448.4 448.8 l1.7 4.5" stroke="#1f5c57" stroke-width="0.74" opacity="0.39"/><path d="M382.4 225.3 l3.8 0.5" stroke="#3c7c72" stroke-width="0.65" opacity="0.40"/><path d="M346.8 374.3 l-5.3 -0.4" stroke="#3c7c72" stroke-width="1.02" opacity="0.27"/><path d="M362.6 277.6 l-0.8 2.9" stroke="#3c7c72" stroke-width="0.85" opacity="0.59"/><path d="M406.7 271.6 l-1.2 8.7" stroke="#e4f0cc" stroke-width="0.60" opacity="0.28"/><path d="M374.0 372.1 l1.2 4.3" stroke="#2a6a64" stroke-width="1.14" opacity="0.34"/><path d="M350.9 309.5 l0.4 3.2" stroke="#1f5c57" stroke-width="0.76" opacity="0.48"/><path d="M427.4 426.5 l1.2 5.2" stroke="#e4f0cc" stroke-width="0.83" opacity="0.30"/><path d="M428.3 368.9 l2.1 2.5" stroke="#1f5c57" stroke-width="1.04" opacity="0.57"/><path d="M431.8 350.7 l-5.2 5.9" stroke="#1f5c57" stroke-width="0.61" opacity="0.28"/><path d="M345.1 367.5 l-5.8 6.6" stroke="#2a6a64" stroke-width="0.64" opacity="0.47"/><path d="M423.0 331.4 l1.5 2.6" stroke="#2a6a64" stroke-width="1.16" opacity="0.48"/><path d="M348.1 391.8 l0.2 4.5" stroke="#1f5c57" stroke-width="1.11" opacity="0.33"/><path d="M419.3 324.3 l2.3 7.7" stroke="#3c7c72" stroke-width="0.65" opacity="0.52"/><path d="M415.3 368.8 l1.1 3.3" stroke="#3c7c72" stroke-width="1.12" opacity="0.47"/><path d="M356.3 329.7 l0.3 5.9" stroke="#2a6a64" stroke-width="1.28" opacity="0.49"/><path d="M422.4 283.0 l-2.4 5.6" stroke="#1f5c57" stroke-width="0.68" opacity="0.36"/><path d="M350.5 327.4 l-0.8 4.7" stroke="#e4f0cc" stroke-width="0.65" opacity="0.60"/><path d="M387.2 435.6 l1.0 8.5" stroke="#3c7c72" stroke-width="1.12" opacity="0.58"/><path d="M356.2 412.1 l-1.0 6.0" stroke="#3c7c72" stroke-width="1.22" opacity="0.33"/><path d="M449.5 330.6 l2.4 2.0" stroke="#3c7c72" stroke-width="0.92" opacity="0.50"/><path d="M390.8 303.8 l-0.2 3.7" stroke="#3c7c72" stroke-width="0.83" opacity="0.51"/><path d="M442.4 241.3 l8.6 0.0" stroke="#3c7c72" stroke-width="0.80" opacity="0.27"/><path d="M387.6 424.3 l-3.1 1.5" stroke="#3c7c72" stroke-width="1.25" opacity="0.55"/><path d="M374.2 224.6 l6.9 -1.2" stroke="#e4f0cc" stroke-width="1.28" opacity="0.43"/><path d="M363.2 303.1 l-3.7 7.9" stroke="#e4f0cc" stroke-width="1.22" opacity="0.57"/><path d="M454.8 346.0 l6.5 3.3" stroke="#1f5c57" stroke-width="0.92" opacity="0.48"/><path d="M374.9 224.0 l8.6 0.4" stroke="#e4f0cc" stroke-width="0.69" opacity="0.40"/><path d="M374.4 274.4 l-3.2 6.7" stroke="#e4f0cc" stroke-width="0.77" opacity="0.45"/><path d="M388.1 252.8 l-1.9 3.5" stroke="#e4f0cc" stroke-width="0.75" opacity="0.44"/><path d="M395.3 293.2 l-4.2 6.3" stroke="#1f5c57" stroke-width="0.77" opacity="0.37"/><path d="M351.1 270.3 l-0.1 4.5" stroke="#2a6a64" stroke-width="1.00" opacity="0.51"/><path d="M390.4 313.0 l-2.3 5.7" stroke="#3c7c72" stroke-width="0.64" opacity="0.45"/><path d="M383.9 379.6 l1.4 6.0" stroke="#1f5c57" stroke-width="1.15" opacity="0.28"/><path d="M449.4 305.8 l-0.7 6.8" stroke="#2a6a64" stroke-width="1.17" opacity="0.29"/><path d="M391.9 398.3 l1.0 7.8" stroke="#e4f0cc" stroke-width="1.28" opacity="0.25"/><path d="M387.8 438.1 l5.4 5.8" stroke="#2a6a64" stroke-width="0.77" opacity="0.33"/><path d="M358.6 449.1 l-3.5 1.0" stroke="#e4f0cc" stroke-width="1.18" opacity="0.28"/><path d="M434.8 212.3 l3.8 0.2" stroke="#1f5c57" stroke-width="1.10" opacity="0.47"/><path d="M404.4 318.7 l-0.2 7.6" stroke="#3c7c72" stroke-width="0.67" opacity="0.43"/><path d="M411.1 306.7 l0.0 4.3" stroke="#e4f0cc" stroke-width="0.81" opacity="0.35"/><path d="M378.6 416.8 l-0.8 4.4" stroke="#1f5c57" stroke-width="0.97" opacity="0.26"/><path d="M390.2 370.5 l1.0 3.2" stroke="#2a6a64" stroke-width="1.05" opacity="0.34"/><path d="M421.4 437.7 l3.9 2.0" stroke="#3c7c72" stroke-width="0.62" opacity="0.50"/><path d="M384.2 308.7 l-1.0 2.9" stroke="#e4f0cc" stroke-width="0.65" opacity="0.59"/><path d="M378.0 412.1 l3.1 3.1" stroke="#3c7c72" stroke-width="0.76" opacity="0.29"/><path d="M416.1 360.9 l-7.0 4.5" stroke="#1f5c57" stroke-width="0.64" opacity="0.57"/><path d="M346.6 217.8 l6.5 -0.7" stroke="#2a6a64" stroke-width="0.89" opacity="0.31"/><path d="M394.9 385.7 l0.6 4.8" stroke="#1f5c57" stroke-width="0.72" opacity="0.31"/><path d="M454.2 394.1 l1.4 2.9" stroke="#e4f0cc" stroke-width="1.07" opacity="0.54"/><path d="M460.2 320.0 l1.9 3.1" stroke="#2a6a64" stroke-width="0.89" opacity="0.45"/><path d="M432.6 304.8 l2.2 7.3" stroke="#e4f0cc" stroke-width="0.82" opacity="0.28"/><path d="M426.0 259.8 l-1.6 6.0" stroke="#e4f0cc" stroke-width="1.12" opacity="0.26"/><path d="M390.1 410.1 l0.7 7.6" stroke="#2a6a64" stroke-width="0.63" opacity="0.41"/><path d="M438.0 227.1 l3.8 1.7" stroke="#3c7c72" stroke-width="0.85" opacity="0.59"/><path d="M415.3 276.0 l2.5 6.8" stroke="#3c7c72" stroke-width="0.82" opacity="0.35"/><path d="M428.0 357.3 l2.6 7.4" stroke="#2a6a64" stroke-width="1.18" opacity="0.42"/><path d="M456.7 444.8 l1.5 5.1" stroke="#e4f0cc" stroke-width="0.78" opacity="0.54"/><path d="M356.2 333.2 l0.4 3.0" stroke="#1f5c57" stroke-width="1.08" opacity="0.46"/><path d="M380.0 290.0 l-1.5 4.9" stroke="#2a6a64" stroke-width="1.15" opacity="0.43"/><path d="M387.8 251.0 l-2.2 5.0" stroke="#1f5c57" stroke-width="0.98" opacity="0.59"/><path d="M447.8 453.0 l-0.8 4.5" stroke="#2a6a64" stroke-width="0.66" opacity="0.40"/><path d="M460.6 449.2 l2.7 3.0" stroke="#1f5c57" stroke-width="1.22" opacity="0.51"/><path d="M443.3 374.1 l2.3 2.9" stroke="#3c7c72" stroke-width="1.19" opacity="0.35"/><path d="M372.7 274.0 l-2.0 4.1" stroke="#3c7c72" stroke-width="0.76" opacity="0.56"/><path d="M410.6 291.6 l1.0 5.3" stroke="#1f5c57" stroke-width="1.29" opacity="0.48"/><path d="M352.3 325.2 l2.2 2.4" stroke="#e4f0cc" stroke-width="0.76" opacity="0.57"/><path d="M344.9 283.7 l-1.1 3.5" stroke="#1f5c57" stroke-width="0.73" opacity="0.58"/><path d="M385.4 423.3 l-0.8 5.6" stroke="#2a6a64" stroke-width="1.26" opacity="0.47"/><path d="M426.6 297.3 l2.8 1.7" stroke="#2a6a64" stroke-width="0.84" opacity="0.32"/><path d="M371.1 358.3 l-1.0 6.8" stroke="#3c7c72" stroke-width="0.83" opacity="0.31"/><path d="M378.1 261.6 l-0.5 7.8" stroke="#2a6a64" stroke-width="0.98" opacity="0.39"/><path d="M437.1 374.0 l-1.8 3.5" stroke="#3c7c72" stroke-width="0.88" opacity="0.39"/><path d="M374.6 287.1 l-2.6 8.3" stroke="#3c7c72" stroke-width="0.82" opacity="0.39"/><path d="M342.2 399.1 l-4.7 6.2" stroke="#2a6a64" stroke-width="0.88" opacity="0.40"/><path d="M359.1 239.7 l3.4 -1.1" stroke="#3c7c72" stroke-width="1.00" opacity="0.41"/><path d="M359.8 215.6 l5.6 -2.8" stroke="#3c7c72" stroke-width="0.66" opacity="0.51"/><path d="M360.9 296.9 l-3.5 1.9" stroke="#2a6a64" stroke-width="0.72" opacity="0.29"/><path d="M399.8 408.4 l0.7 8.8" stroke="#e4f0cc" stroke-width="1.26" opacity="0.36"/><path d="M414.1 367.3 l1.1 3.3" stroke="#1f5c57" stroke-width="1.10" opacity="0.47"/><path d="M444.5 363.5 l2.9 6.0" stroke="#2a6a64" stroke-width="1.00" opacity="0.39"/><path d="M403.2 305.6 l2.0 3.2" stroke="#1f5c57" stroke-width="0.77" opacity="0.26"/><path d="M408.6 396.8 l0.6 3.2" stroke="#3c7c72" stroke-width="1.02" opacity="0.48"/><path d="M377.6 272.8 l-1.8 5.0" stroke="#e4f0cc" stroke-width="0.86" opacity="0.31"/><path d="M340.4 452.6 l-4.9 3.1" stroke="#1f5c57" stroke-width="1.17" opacity="0.53"/><path d="M388.8 228.4 l5.1 0.4" stroke="#e4f0cc" stroke-width="0.86" opacity="0.43"/><path d="M420.2 221.9 l3.7 0.9" stroke="#2a6a64" stroke-width="1.10" opacity="0.27"/><path d="M401.5 304.2 l-1.7 8.5" stroke="#2a6a64" stroke-width="0.70" opacity="0.60"/><path d="M429.3 410.9 l2.8 3.0" stroke="#1f5c57" stroke-width="1.27" opacity="0.49"/><path d="M428.0 266.0 l0.8 8.0" stroke="#3c7c72" stroke-width="1.03" opacity="0.31"/><path d="M449.4 279.1 l4.9 6.2" stroke="#1f5c57" stroke-width="1.24" opacity="0.46"/><path d="M415.1 269.9 l2.8 4.5" stroke="#e4f0cc" stroke-width="0.74" opacity="0.31"/><path d="M454.2 377.8 l5.7 6.1" stroke="#2a6a64" stroke-width="0.68" opacity="0.47"/><path d="M383.9 425.0 l3.9 5.0" stroke="#2a6a64" stroke-width="1.01" opacity="0.34"/><path d="M405.4 421.0 l-2.2 7.1" stroke="#1f5c57" stroke-width="0.86" opacity="0.38"/><path d="M433.3 319.9 l2.1 3.5" stroke="#2a6a64" stroke-width="1.12" opacity="0.35"/><path d="M403.0 287.7 l6.3 6.1" stroke="#2a6a64" stroke-width="1.23" opacity="0.51"/><path d="M367.0 283.0 l-5.8 3.5" stroke="#3c7c72" stroke-width="0.89" opacity="0.56"/><path d="M356.1 267.5 l-1.6 6.7" stroke="#2a6a64" stroke-width="0.85" opacity="0.43"/><path d="M405.2 312.8 l0.2 4.8" stroke="#3c7c72" stroke-width="0.69" opacity="0.47"/><path d="M397.9 244.9 l8.6 -0.0" stroke="#1f5c57" stroke-width="0.67" opacity="0.55"/><path d="M435.4 310.1 l2.2 4.0" stroke="#3c7c72" stroke-width="0.61" opacity="0.46"/><path d="M410.6 358.9 l-1.4 5.9" stroke="#2a6a64" stroke-width="0.60" opacity="0.44"/><path d="M389.5 270.0 l-0.2 3.3" stroke="#2a6a64" stroke-width="1.15" opacity="0.46"/><path d="M420.1 260.1 l-3.1 4.5" stroke="#e4f0cc" stroke-width="1.05" opacity="0.53"/><path d="M361.3 287.5 l-1.5 4.6" stroke="#e4f0cc" stroke-width="0.63" opacity="0.50"/><path d="M340.8 418.0 l-6.8 3.0" stroke="#1f5c57" stroke-width="0.92" opacity="0.60"/><path d="M371.9 369.1 l0.0 3.7" stroke="#3c7c72" stroke-width="1.22" opacity="0.50"/><path d="M372.5 347.1 l-0.1 5.6" stroke="#1f5c57" stroke-width="0.79" opacity="0.28"/><path d="M401.9 253.4 l-4.6 7.1" stroke="#1f5c57" stroke-width="1.19" opacity="0.58"/><path d="M431.0 291.8 l0.1 8.3" stroke="#e4f0cc" stroke-width="1.24" opacity="0.42"/><path d="M404.7 213.6 l3.1 0.6" stroke="#1f5c57" stroke-width="1.27" opacity="0.45"/><path d="M377.5 263.7 l5.0 4.5" stroke="#2a6a64" stroke-width="0.70" opacity="0.29"/><path d="M415.9 251.5 l5.1 7.3" stroke="#2a6a64" stroke-width="1.09" opacity="0.26"/><path d="M424.5 366.7 l0.9 7.1" stroke="#3c7c72" stroke-width="1.01" opacity="0.32"/><path d="M456.5 342.3 l1.1 6.9" stroke="#e4f0cc" stroke-width="1.22" opacity="0.29"/><path d="M365.1 239.3 l3.2 0.5" stroke="#3c7c72" stroke-width="1.04" opacity="0.42"/><path d="M356.2 405.2 l-5.8 3.7" stroke="#3c7c72" stroke-width="0.81" opacity="0.40"/><path d="M342.6 274.6 l-2.0 4.2" stroke="#e4f0cc" stroke-width="0.82" opacity="0.55"/><path d="M415.4 219.6 l5.4 -1.0" stroke="#2a6a64" stroke-width="0.91" opacity="0.37"/><path d="M426.0 343.2 l1.3 4.1" stroke="#1f5c57" stroke-width="1.17" opacity="0.40"/><path d="M403.9 282.4 l-1.1 7.4" stroke="#3c7c72" stroke-width="0.64" opacity="0.42"/><path d="M400.0 406.4 l-1.8 3.7" stroke="#3c7c72" stroke-width="1.18" opacity="0.45"/><path d="M359.4 410.9 l-2.0 8.4" stroke="#1f5c57" stroke-width="0.76" opacity="0.29"/><path d="M417.7 231.7 l7.7 -0.7" stroke="#3c7c72" stroke-width="1.04" opacity="0.28"/><path d="M453.3 429.6 l-3.7 6.5" stroke="#2a6a64" stroke-width="0.90" opacity="0.38"/><path d="M377.0 316.4 l3.2 5.4" stroke="#e4f0cc" stroke-width="1.04" opacity="0.29"/><path d="M412.5 380.2 l6.4 1.6" stroke="#3c7c72" stroke-width="0.62" opacity="0.43"/><path d="M445.9 321.9 l0.2 6.3" stroke="#3c7c72" stroke-width="1.08" opacity="0.45"/><path d="M355.4 324.7 l1.9 8.1" stroke="#1f5c57" stroke-width="0.77" opacity="0.34"/><path d="M432.1 413.7 l-0.2 6.7" stroke="#3c7c72" stroke-width="1.11" opacity="0.31"/><path d="M380.0 258.2 l-8.8 1.0" stroke="#2a6a64" stroke-width="1.11" opacity="0.31"/><path d="M420.3 259.7 l1.4 3.6" stroke="#3c7c72" stroke-width="0.81" opacity="0.32"/><path d="M417.8 238.1 l4.1 0.9" stroke="#2a6a64" stroke-width="0.87" opacity="0.25"/><path d="M444.2 318.5 l2.7 3.4" stroke="#3c7c72" stroke-width="0.62" opacity="0.46"/><path d="M389.4 392.8 l-1.0 8.4" stroke="#e4f0cc" stroke-width="0.90" opacity="0.55"/><path d="M421.5 371.2 l-2.3 7.9" stroke="#1f5c57" stroke-width="0.76" opacity="0.47"/><path d="M395.4 288.4 l-3.5 5.8" stroke="#e4f0cc" stroke-width="0.67" opacity="0.33"/><path d="M388.8 385.9 l1.0 3.8" stroke="#e4f0cc" stroke-width="0.61" opacity="0.43"/><path d="M420.7 425.0 l-2.8 7.9" stroke="#2a6a64" stroke-width="0.83" opacity="0.39"/><path d="M399.8 449.8 l-0.9 3.1" stroke="#1f5c57" stroke-width="1.15" opacity="0.43"/><path d="M352.3 352.2 l-2.2 5.8" stroke="#2a6a64" stroke-width="1.10" opacity="0.47"/><path d="M441.1 339.3 l3.0 4.6" stroke="#e4f0cc" stroke-width="1.08" opacity="0.43"/><path d="M453.8 389.9 l1.4 6.5" stroke="#3c7c72" stroke-width="1.05" opacity="0.35"/><path d="M388.8 215.2 l5.1 -2.0" stroke="#3c7c72" stroke-width="0.85" opacity="0.29"/><path d="M377.0 309.7 l2.0 8.5" stroke="#e4f0cc" stroke-width="1.28" opacity="0.41"/><path d="M360.1 438.8 l-0.5 3.4" stroke="#1f5c57" stroke-width="1.05" opacity="0.54"/><path d="M357.8 374.5 l-4.3 6.7" stroke="#e4f0cc" stroke-width="1.16" opacity="0.41"/><path d="M375.9 345.8 l0.3 3.7" stroke="#3c7c72" stroke-width="1.20" opacity="0.50"/><path d="M423.9 451.8 l-1.8 6.8" stroke="#3c7c72" stroke-width="0.94" opacity="0.38"/><path d="M419.8 290.2 l-0.2 5.9" stroke="#1f5c57" stroke-width="1.23" opacity="0.58"/><path d="M444.2 225.9 l8.0 0.5" stroke="#1f5c57" stroke-width="1.23" opacity="0.44"/><path d="M382.1 354.1 l-0.4 6.9" stroke="#2a6a64" stroke-width="0.81" opacity="0.45"/><path d="M444.2 257.3 l2.5 5.1" stroke="#1f5c57" stroke-width="1.15" opacity="0.57"/><path d="M436.6 253.0 l-3.7 7.5" stroke="#3c7c72" stroke-width="1.07" opacity="0.32"/><path d="M424.5 341.5 l-2.9 6.9" stroke="#2a6a64" stroke-width="0.91" opacity="0.44"/><path d="M372.3 269.1 l-1.3 3.6" stroke="#1f5c57" stroke-width="0.93" opacity="0.50"/><path d="M370.1 252.2 l-1.1 6.5" stroke="#1f5c57" stroke-width="1.11" opacity="0.54"/><path d="M397.1 349.3 l1.7 6.8" stroke="#2a6a64" stroke-width="0.89" opacity="0.31"/><path d="M384.0 369.8 l-1.5 2.7" stroke="#3c7c72" stroke-width="0.63" opacity="0.53"/><path d="M351.5 330.1 l-0.6 7.5" stroke="#1f5c57" stroke-width="0.89" opacity="0.37"/><path d="M445.1 301.3 l3.0 5.0" stroke="#1f5c57" stroke-width="0.97" opacity="0.35"/><path d="M381.7 273.4 l-0.7 3.2" stroke="#3c7c72" stroke-width="0.95" opacity="0.43"/><path d="M373.1 335.6 l2.6 8.5" stroke="#2a6a64" stroke-width="1.06" opacity="0.37"/><path d="M378.7 285.0 l-4.2 5.0" stroke="#e4f0cc" stroke-width="0.63" opacity="0.44"/><path d="M346.1 285.3 l-2.5 1.7" stroke="#e4f0cc" stroke-width="0.73" opacity="0.46"/><path d="M420.3 404.5 l-3.3 7.8" stroke="#2a6a64" stroke-width="1.04" opacity="0.32"/><path d="M421.4 323.7 l-2.4 7.2" stroke="#1f5c57" stroke-width="0.67" opacity="0.55"/><path d="M391.4 236.5 l7.6 4.0" stroke="#3c7c72" stroke-width="0.70" opacity="0.45"/><path d="M371.5 285.7 l-0.5 5.5" stroke="#e4f0cc" stroke-width="0.82" opacity="0.45"/><path d="M410.6 435.0 l-4.5 3.9" stroke="#e4f0cc" stroke-width="1.14" opacity="0.45"/><path d="M452.1 320.9 l0.6 3.0" stroke="#1f5c57" stroke-width="0.87" opacity="0.42"/><path d="M390.3 236.9 l6.9 0.0" stroke="#2a6a64" stroke-width="0.61" opacity="0.25"/><path d="M421.7 452.7 l3.2 7.5" stroke="#2a6a64" stroke-width="0.75" opacity="0.30"/><path d="M342.2 387.5 l-1.7 4.1" stroke="#1f5c57" stroke-width="0.64" opacity="0.51"/><path d="M350.3 365.4 l-4.2 5.9" stroke="#3c7c72" stroke-width="0.92" opacity="0.57"/><path d="M346.4 219.8 l3.3 0.4" stroke="#e4f0cc" stroke-width="1.03" opacity="0.36"/><path d="M429.0 252.5 l-2.7 7.7" stroke="#2a6a64" stroke-width="0.94" opacity="0.36"/><path d="M455.7 389.6 l4.9 3.2" stroke="#1f5c57" stroke-width="0.68" opacity="0.47"/><path d="M391.0 306.1 l6.8 3.7" stroke="#3c7c72" stroke-width="1.26" opacity="0.35"/><path d="M347.4 449.6 l-0.8 7.2" stroke="#2a6a64" stroke-width="1.02" opacity="0.54"/><path d="M413.3 287.3 l-1.7 5.3" stroke="#e4f0cc" stroke-width="1.22" opacity="0.39"/><path d="M385.9 400.2 l-3.2 3.0" stroke="#3c7c72" stroke-width="0.83" opacity="0.40"/><path d="M411.6 411.1 l2.5 8.0" stroke="#1f5c57" stroke-width="0.63" opacity="0.53"/><path d="M445.8 351.5 l3.4 3.2" stroke="#e4f0cc" stroke-width="1.08" opacity="0.37"/><path d="M350.4 347.1 l-6.7 4.0" stroke="#1f5c57" stroke-width="0.74" opacity="0.36"/><path d="M347.0 308.5 l2.0 7.0" stroke="#e4f0cc" stroke-width="0.61" opacity="0.41"/><path d="M350.7 408.8 l-4.3 6.3" stroke="#3c7c72" stroke-width="0.76" opacity="0.56"/><path d="M403.7 328.3 l0.9 6.5" stroke="#3c7c72" stroke-width="0.73" opacity="0.38"/><path d="M408.9 310.2 l2.1 5.7" stroke="#2a6a64" stroke-width="0.70" opacity="0.57"/><path d="M400.2 423.4 l-1.0 5.1" stroke="#2a6a64" stroke-width="0.82" opacity="0.37"/><path d="M403.4 217.0 l3.2 0.1" stroke="#e4f0cc" stroke-width="1.29" opacity="0.46"/><path d="M366.1 437.8 l1.1 4.5" stroke="#1f5c57" stroke-width="1.02" opacity="0.34"/><path d="M344.6 261.0 l-0.1 4.1" stroke="#2a6a64" stroke-width="0.66" opacity="0.26"/><path d="M385.1 384.2 l2.9 5.2" stroke="#e4f0cc" stroke-width="1.20" opacity="0.57"/><path d="M426.2 233.9 l4.6 -1.7" stroke="#2a6a64" stroke-width="0.76" opacity="0.58"/><path d="M421.7 307.9 l4.2 3.8" stroke="#1f5c57" stroke-width="1.29" opacity="0.31"/><path d="M454.9 441.6 l3.3 0.5" stroke="#2a6a64" stroke-width="0.99" opacity="0.54"/><path d="M345.7 403.9 l-6.8 2.6" stroke="#1f5c57" stroke-width="0.64" opacity="0.36"/><path d="M340.7 260.5 l-7.5 0.4" stroke="#e4f0cc" stroke-width="1.01" opacity="0.52"/><path d="M352.9 291.0 l0.6 4.5" stroke="#1f5c57" stroke-width="0.72" opacity="0.53"/><path d="M451.5 429.7 l3.8 4.4" stroke="#2a6a64" stroke-width="1.24" opacity="0.30"/><path d="M441.6 231.0 l6.6 -1.1" stroke="#2a6a64" stroke-width="1.14" opacity="0.57"/><path d="M387.0 217.3 l3.3 0.9" stroke="#3c7c72" stroke-width="1.28" opacity="0.54"/><path d="M398.3 365.3 l0.1 3.9" stroke="#1f5c57" stroke-width="1.10" opacity="0.40"/><path d="M358.2 314.1 l-0.4 4.5" stroke="#3c7c72" stroke-width="0.62" opacity="0.37"/><path d="M360.5 331.8 l-0.2 4.9" stroke="#2a6a64" stroke-width="1.29" opacity="0.47"/><path d="M436.1 437.8 l0.5 6.3" stroke="#2a6a64" stroke-width="1.18" opacity="0.34"/><path d="M364.6 300.9 l7.1 5.4" stroke="#3c7c72" stroke-width="0.67" opacity="0.40"/><path d="M359.8 415.1 l-2.2 8.6" stroke="#2a6a64" stroke-width="0.70" opacity="0.40"/><path d="M402.0 336.6 l1.7 5.4" stroke="#3c7c72" stroke-width="0.80" opacity="0.40"/><path d="M451.3 265.3 l-4.8 4.2" stroke="#1f5c57" stroke-width="0.70" opacity="0.43"/><path d="M368.1 254.9 l2.0 6.3" stroke="#3c7c72" stroke-width="1.11" opacity="0.31"/><path d="M356.7 375.5 l-6.3 2.6" stroke="#3c7c72" stroke-width="0.73" opacity="0.32"/><path d="M348.0 390.8 l-1.8 5.1" stroke="#3c7c72" stroke-width="1.17" opacity="0.35"/><path d="M418.0 442.7 l-0.2 3.5" stroke="#e4f0cc" stroke-width="0.89" opacity="0.30"/><path d="M421.2 272.6 l1.7 6.2" stroke="#2a6a64" stroke-width="1.09" opacity="0.37"/><path d="M453.7 448.4 l1.0 3.3" stroke="#1f5c57" stroke-width="0.85" opacity="0.54"/><path d="M445.6 290.3 l-2.4 6.9" stroke="#2a6a64" stroke-width="0.64" opacity="0.58"/><path d="M400.4 337.2 l3.3 5.2" stroke="#2a6a64" stroke-width="0.98" opacity="0.34"/><path d="M350.8 363.1 l-2.0 3.4" stroke="#2a6a64" stroke-width="1.27" opacity="0.28"/><path d="M425.3 259.6 l2.1 2.3" stroke="#e4f0cc" stroke-width="1.02" opacity="0.43"/><path d="M425.7 237.1 l8.2 0.5" stroke="#e4f0cc" stroke-width="0.69" opacity="0.46"/><path d="M432.9 238.8 l3.7 0.1" stroke="#1f5c57" stroke-width="1.22" opacity="0.55"/><path d="M358.0 351.8 l1.7 7.3" stroke="#e4f0cc" stroke-width="1.26" opacity="0.49"/><path d="M412.8 359.1 l2.5 2.1" stroke="#2a6a64" stroke-width="1.28" opacity="0.52"/><path d="M381.3 270.7 l-4.9 0.8" stroke="#3c7c72" stroke-width="1.16" opacity="0.54"/><path d="M443.4 225.1 l5.6 2.4" stroke="#3c7c72" stroke-width="1.27" opacity="0.34"/><path d="M391.5 366.4 l-1.2 5.0" stroke="#2a6a64" stroke-width="0.90" opacity="0.33"/><path d="M391.3 308.9 l-0.8 8.9" stroke="#2a6a64" stroke-width="0.92" opacity="0.53"/><path d="M447.9 427.9 l0.1 3.2" stroke="#3c7c72" stroke-width="1.07" opacity="0.47"/><path d="M438.4 220.7 l3.6 -0.1" stroke="#2a6a64" stroke-width="0.69" opacity="0.40"/><path d="M456.0 282.2 l0.9 4.8" stroke="#3c7c72" stroke-width="1.02" opacity="0.28"/><path d="M412.0 439.4 l-0.7 5.6" stroke="#3c7c72" stroke-width="0.96" opacity="0.57"/><path d="M410.4 278.9 l0.3 7.4" stroke="#1f5c57" stroke-width="0.92" opacity="0.48"/><path d="M364.5 385.3 l-3.4 4.7" stroke="#e4f0cc" stroke-width="0.98" opacity="0.41"/><path d="M377.9 271.1 l-2.5 3.5" stroke="#2a6a64" stroke-width="1.01" opacity="0.57"/><path d="M359.8 444.3 l-1.4 4.8" stroke="#3c7c72" stroke-width="0.83" opacity="0.35"/><path d="M460.5 284.1 l3.4 6.8" stroke="#e4f0cc" stroke-width="1.21" opacity="0.48"/><path d="M403.1 415.6 l0.9 5.0" stroke="#1f5c57" stroke-width="1.13" opacity="0.60"/><path d="M422.7 439.9 l0.0 5.5" stroke="#3c7c72" stroke-width="0.74" opacity="0.54"/><path d="M403.2 392.3 l-1.6 7.3" stroke="#e4f0cc" stroke-width="1.13" opacity="0.34"/><path d="M416.9 366.2 l-0.7 7.2" stroke="#2a6a64" stroke-width="0.89" opacity="0.42"/><path d="M457.5 351.6 l2.5 4.9" stroke="#2a6a64" stroke-width="1.15" opacity="0.38"/><path d="M395.2 323.7 l-1.2 7.2" stroke="#e4f0cc" stroke-width="0.99" opacity="0.48"/><path d="M340.8 394.0 l1.1 8.9" stroke="#3c7c72" stroke-width="0.87" opacity="0.31"/><path d="M377.1 247.4 l6.4 -1.0" stroke="#3c7c72" stroke-width="1.24" opacity="0.59"/><path d="M414.2 271.2 l-0.1 5.0" stroke="#2a6a64" stroke-width="1.28" opacity="0.26"/><path d="M371.3 430.6 l-2.7 4.0" stroke="#e4f0cc" stroke-width="1.03" opacity="0.43"/><path d="M403.1 379.2 l-0.4 5.3" stroke="#3c7c72" stroke-width="0.85" opacity="0.41"/><path d="M341.3 228.7 l4.0 -1.8" stroke="#1f5c57" stroke-width="1.05" opacity="0.56"/><path d="M457.7 330.8 l3.5 4.4" stroke="#3c7c72" stroke-width="1.04" opacity="0.49"/><path d="M431.1 234.5 l5.2 0.1" stroke="#1f5c57" stroke-width="0.82" opacity="0.29"/><path d="M449.1 380.3 l3.4 7.2" stroke="#e4f0cc" stroke-width="1.29" opacity="0.47"/><path d="M403.9 411.1 l1.8 3.9" stroke="#2a6a64" stroke-width="0.64" opacity="0.37"/><path d="M461.2 367.3 l0.2 3.3" stroke="#2a6a64" stroke-width="0.89" opacity="0.36"/><path d="M424.3 213.0 l4.7 1.2" stroke="#1f5c57" stroke-width="1.07" opacity="0.31"/><path d="M433.8 350.4 l-2.8 7.7" stroke="#1f5c57" stroke-width="1.23" opacity="0.45"/><path d="M390.2 241.6 l3.9 -0.1" stroke="#1f5c57" stroke-width="0.67" opacity="0.58"/><path d="M399.8 326.1 l-1.3 5.4" stroke="#2a6a64" stroke-width="1.16" opacity="0.49"/><path d="M410.6 247.1 l4.4 0.1" stroke="#2a6a64" stroke-width="1.04" opacity="0.37"/><path d="M394.9 306.1 l0.3 3.3" stroke="#2a6a64" stroke-width="1.22" opacity="0.40"/><path d="M415.7 272.8 l2.7 1.8" stroke="#e4f0cc" stroke-width="0.82" opacity="0.36"/><path d="M413.5 446.2 l-1.9 5.6" stroke="#1f5c57" stroke-width="1.26" opacity="0.49"/><path d="M422.3 354.7 l-2.6 4.8" stroke="#1f5c57" stroke-width="0.62" opacity="0.28"/><path d="M360.7 304.5 l0.7 3.0" stroke="#e4f0cc" stroke-width="1.22" opacity="0.45"/><path d="M354.0 342.2 l-2.2 4.8" stroke="#3c7c72" stroke-width="0.69" opacity="0.44"/><path d="M387.3 326.0 l0.1 5.1" stroke="#3c7c72" stroke-width="0.90" opacity="0.48"/><path d="M381.7 250.0 l1.6 7.1" stroke="#1f5c57" stroke-width="1.18" opacity="0.44"/><path d="M397.0 406.0 l0.9 4.4" stroke="#1f5c57" stroke-width="0.86" opacity="0.50"/><path d="M386.0 445.9 l2.0 3.8" stroke="#e4f0cc" stroke-width="0.76" opacity="0.49"/><path d="M454.9 455.5 l1.0 6.5" stroke="#3c7c72" stroke-width="0.91" opacity="0.44"/><path d="M389.3 336.5 l-0.2 3.7" stroke="#3c7c72" stroke-width="0.66" opacity="0.51"/><path d="M433.3 219.0 l7.0 -2.0" stroke="#2a6a64" stroke-width="0.70" opacity="0.39"/><path d="M350.5 255.2 l-4.7 6.6" stroke="#3c7c72" stroke-width="0.68" opacity="0.53"/><path d="M432.5 259.0 l5.5 4.8" stroke="#3c7c72" stroke-width="0.66" opacity="0.29"/><path d="M427.4 280.9 l4.2 3.4" stroke="#1f5c57" stroke-width="1.22" opacity="0.58"/><path d="M361.5 301.4 l-5.0 6.0" stroke="#e4f0cc" stroke-width="1.08" opacity="0.26"/><path d="M425.9 324.9 l-6.0 6.7" stroke="#3c7c72" stroke-width="0.67" opacity="0.29"/><path d="M451.3 391.1 l5.9 4.3" stroke="#2a6a64" stroke-width="0.63" opacity="0.46"/><path d="M392.5 396.7 l-0.4 3.9" stroke="#1f5c57" stroke-width="1.04" opacity="0.45"/><path d="M367.8 333.5 l-4.5 4.2" stroke="#3c7c72" stroke-width="1.25" opacity="0.58"/><path d="M353.6 398.3 l3.6 5.9" stroke="#2a6a64" stroke-width="1.01" opacity="0.59"/><path d="M423.1 221.1 l4.8 -1.1" stroke="#3c7c72" stroke-width="1.14" opacity="0.51"/><path d="M350.5 381.5 l-1.6 5.1" stroke="#2a6a64" stroke-width="0.80" opacity="0.37"/><path d="M455.9 320.0 l-2.9 4.1" stroke="#e4f0cc" stroke-width="0.95" opacity="0.43"/><path d="M422.5 262.3 l4.1 5.7" stroke="#1f5c57" stroke-width="0.94" opacity="0.27"/><path d="M425.7 408.6 l-2.4 3.9" stroke="#1f5c57" stroke-width="0.98" opacity="0.44"/><path d="M370.5 226.5 l5.0 -1.2" stroke="#1f5c57" stroke-width="0.82" opacity="0.49"/><path d="M399.3 329.8 l1.2 7.1" stroke="#e4f0cc" stroke-width="0.60" opacity="0.30"/><path d="M418.2 382.3 l-0.2 3.8" stroke="#2a6a64" stroke-width="0.77" opacity="0.44"/><path d="M432.8 253.3 l-3.0 6.3" stroke="#e4f0cc" stroke-width="1.02" opacity="0.54"/><path d="M389.5 262.3 l3.5 6.2" stroke="#3c7c72" stroke-width="0.63" opacity="0.36"/><path d="M353.5 287.4 l-2.0 8.5" stroke="#e4f0cc" stroke-width="0.71" opacity="0.41"/><path d="M384.3 253.0 l3.4 0.4" stroke="#2a6a64" stroke-width="1.13" opacity="0.51"/><path d="M380.5 392.3 l-0.1 4.6" stroke="#e4f0cc" stroke-width="1.05" opacity="0.42"/><path d="M435.6 290.5 l2.7 4.4" stroke="#3c7c72" stroke-width="1.03" opacity="0.48"/><path d="M349.5 394.4 l-0.3 3.1" stroke="#1f5c57" stroke-width="0.88" opacity="0.35"/><path d="M362.7 367.7 l0.4 8.1" stroke="#3c7c72" stroke-width="1.15" opacity="0.51"/><path d="M379.9 257.0 l-2.0 7.7" stroke="#3c7c72" stroke-width="0.82" opacity="0.30"/><path d="M452.2 416.4 l2.3 3.9" stroke="#e4f0cc" stroke-width="1.16" opacity="0.57"/><path d="M455.3 332.6 l2.4 5.5" stroke="#3c7c72" stroke-width="0.71" opacity="0.46"/><path d="M416.4 246.6 l4.2 1.2" stroke="#2a6a64" stroke-width="0.88" opacity="0.55"/><path d="M398.5 265.3 l2.7 4.5" stroke="#e4f0cc" stroke-width="0.62" opacity="0.30"/><path d="M348.8 225.5 l7.2 -0.6" stroke="#1f5c57" stroke-width="0.61" opacity="0.57"/><path d="M360.1 284.2 l-2.0 5.3" stroke="#3c7c72" stroke-width="0.99" opacity="0.45"/><path d="M397.2 344.4 l-3.3 5.1" stroke="#1f5c57" stroke-width="1.04" opacity="0.59"/><path d="M457.3 363.2 l4.5 6.4" stroke="#3c7c72" stroke-width="0.64" opacity="0.46"/><path d="M376.2 351.4 l-6.6 5.7" stroke="#3c7c72" stroke-width="0.81" opacity="0.44"/><path d="M417.3 418.9 l0.8 4.3" stroke="#2a6a64" stroke-width="1.12" opacity="0.30"/><path d="M410.6 347.4 l-1.5 8.5" stroke="#3c7c72" stroke-width="0.91" opacity="0.29"/><path d="M362.0 429.2 l0.4 6.3" stroke="#3c7c72" stroke-width="0.68" opacity="0.48"/><path d="M362.9 375.5 l-1.0 7.2" stroke="#2a6a64" stroke-width="0.98" opacity="0.51"/><path d="M450.9 350.3 l6.1 5.3" stroke="#e4f0cc" stroke-width="1.08" opacity="0.30"/><path d="M401.4 335.8 l5.0 6.3" stroke="#2a6a64" stroke-width="1.27" opacity="0.41"/><path d="M423.7 344.8 l-0.7 8.8" stroke="#e4f0cc" stroke-width="0.73" opacity="0.52"/><path d="M356.7 401.4 l-0.7 3.3" stroke="#1f5c57" stroke-width="0.61" opacity="0.41"/><path d="M354.7 245.1 l8.4 0.9" stroke="#1f5c57" stroke-width="0.66" opacity="0.45"/><path d="M451.9 424.5 l1.2 3.8" stroke="#2a6a64" stroke-width="1.13" opacity="0.54"/><path d="M355.0 303.0 l-4.9 5.5" stroke="#e4f0cc" stroke-width="1.26" opacity="0.27"/><path d="M413.7 236.3 l6.3 0.5" stroke="#1f5c57" stroke-width="1.25" opacity="0.34"/><path d="M363.6 321.0 l-3.5 7.2" stroke="#2a6a64" stroke-width="1.01" opacity="0.53"/><path d="M399.5 230.0 l4.3 1.5" stroke="#e4f0cc" stroke-width="1.21" opacity="0.54"/><path d="M411.8 273.1 l7.6 4.8" stroke="#3c7c72" stroke-width="1.13" opacity="0.58"/><path d="M341.7 295.5 l-3.8 0.8" stroke="#2a6a64" stroke-width="1.16" opacity="0.28"/><path d="M415.7 369.3 l0.5 6.6" stroke="#1f5c57" stroke-width="1.19" opacity="0.49"/><path d="M394.7 267.9 l-4.2 7.7" stroke="#3c7c72" stroke-width="0.97" opacity="0.56"/><path d="M411.9 222.7 l4.0 0.0" stroke="#e4f0cc" stroke-width="0.85" opacity="0.37"/><path d="M397.1 440.7 l-1.5 4.7" stroke="#1f5c57" stroke-width="0.76" opacity="0.41"/><path d="M460.3 223.1 l3.5 1.6" stroke="#3c7c72" stroke-width="1.07" opacity="0.38"/><path d="M347.7 453.9 l-4.0 3.2" stroke="#2a6a64" stroke-width="0.70" opacity="0.57"/><path d="M450.1 235.2 l4.2 0.0" stroke="#2a6a64" stroke-width="0.90" opacity="0.38"/><path d="M374.4 406.1 l4.3 7.0" stroke="#3c7c72" stroke-width="0.81" opacity="0.51"/><path d="M402.1 367.0 l-1.4 4.9" stroke="#e4f0cc" stroke-width="0.99" opacity="0.37"/><path d="M425.9 375.9 l2.3 8.0" stroke="#1f5c57" stroke-width="1.23" opacity="0.60"/><path d="M358.4 262.1 l-6.1 5.6" stroke="#e4f0cc" stroke-width="1.07" opacity="0.41"/><path d="M409.4 285.8 l1.7 3.6" stroke="#3c7c72" stroke-width="0.82" opacity="0.28"/><path d="M363.2 437.6 l-0.3 6.5" stroke="#3c7c72" stroke-width="0.81" opacity="0.60"/><path d="M383.6 401.0 l0.2 5.6" stroke="#1f5c57" stroke-width="0.94" opacity="0.35"/><path d="M371.4 217.6 l3.9 -0.6" stroke="#2a6a64" stroke-width="0.79" opacity="0.33"/><path d="M388.7 260.9 l2.6 6.1" stroke="#2a6a64" stroke-width="0.74" opacity="0.59"/><path d="M413.3 231.4 l7.6 -1.8" stroke="#3c7c72" stroke-width="1.21" opacity="0.50"/><path d="M340.6 278.0 l0.6 6.8" stroke="#3c7c72" stroke-width="0.62" opacity="0.36"/><path d="M431.4 370.3 l1.2 5.3" stroke="#3c7c72" stroke-width="1.08" opacity="0.31"/><path d="M445.3 406.3 l-1.3 3.3" stroke="#e4f0cc" stroke-width="1.29" opacity="0.34"/><path d="M396.5 215.3 l8.2 -2.5" stroke="#3c7c72" stroke-width="0.99" opacity="0.27"/><path d="M414.9 388.7 l1.6 4.7" stroke="#2a6a64" stroke-width="0.70" opacity="0.38"/><path d="M384.1 296.0 l0.5 7.1" stroke="#1f5c57" stroke-width="1.21" opacity="0.48"/><path d="M413.4 292.7 l0.3 7.4" stroke="#3c7c72" stroke-width="1.13" opacity="0.48"/><path d="M407.0 384.4 l4.7 4.3" stroke="#3c7c72" stroke-width="0.85" opacity="0.30"/><path d="M341.1 328.1 l-1.9 6.7" stroke="#1f5c57" stroke-width="1.29" opacity="0.39"/><path d="M459.4 440.6 l-0.8 6.7" stroke="#1f5c57" stroke-width="0.69" opacity="0.44"/><path d="M362.2 441.3 l-0.2 5.2" stroke="#1f5c57" stroke-width="1.12" opacity="0.43"/><path d="M382.8 385.2 l0.8 5.6" stroke="#1f5c57" stroke-width="1.20" opacity="0.47"/><path d="M382.0 407.3 l-3.2 4.8" stroke="#2a6a64" stroke-width="0.68" opacity="0.27"/><path d="M418.7 310.1 l7.2 3.9" stroke="#e4f0cc" stroke-width="0.64" opacity="0.39"/><path d="M452.1 442.6 l2.5 6.3" stroke="#e4f0cc" stroke-width="0.78" opacity="0.33"/><path d="M383.2 291.6 l1.5 5.3" stroke="#e4f0cc" stroke-width="0.80" opacity="0.33"/><path d="M409.5 250.2 l2.6 7.7" stroke="#3c7c72" stroke-width="1.13" opacity="0.35"/><path d="M380.4 330.5 l-3.3 7.7" stroke="#e4f0cc" stroke-width="0.71" opacity="0.32"/><path d="M346.4 402.9 l-2.7 7.7" stroke="#e4f0cc" stroke-width="1.14" opacity="0.31"/><path d="M445.4 454.7 l0.6 4.8" stroke="#2a6a64" stroke-width="0.62" opacity="0.30"/><path d="M451.3 244.5 l4.8 -0.4" stroke="#e4f0cc" stroke-width="1.13" opacity="0.49"/><path d="M351.0 294.8 l-2.5 8.1" stroke="#3c7c72" stroke-width="1.10" opacity="0.59"/></g>
</g>
<g stroke-linecap="round"><path clip-path="url(#lclip)" d="M286.5 284.5 q3.8 -1.5 7.6 -1.1" stroke="#2f7068" stroke-width="1.08" fill="none" opacity="0.50"/><path clip-path="url(#lclip)" d="M312.4 261.8 q2.0 -1.5 4.0 0.1" stroke="#2f7068" stroke-width="1.16" fill="none" opacity="0.47"/><path clip-path="url(#lclip)" d="M285.0 287.6 q4.7 -1.5 9.4 -0.7" stroke="#5a988c" stroke-width="1.06" fill="none" opacity="0.46"/><path clip-path="url(#lclip)" d="M307.6 297.8 q3.4 -1.5 6.8 -1.5" stroke="#5a988c" stroke-width="0.67" fill="none" opacity="0.68"/><path clip-path="url(#lclip)" d="M302.0 257.7 q3.8 -1.5 7.5 2.9" stroke="#2f7068" stroke-width="0.70" fill="none" opacity="0.59"/><path clip-path="url(#lclip)" d="M304.5 257.6 q3.4 -1.5 6.7 2.6" stroke="#2f7068" stroke-width="1.12" fill="none" opacity="0.39"/><path clip-path="url(#lclip)" d="M333.3 260.4 q4.4 -1.5 8.8 2.6" stroke="#5a988c" stroke-width="1.19" fill="none" opacity="0.33"/><path clip-path="url(#lclip)" d="M316.6 277.9 q3.0 -1.5 5.9 -1.3" stroke="#2f7068" stroke-width="1.15" fill="none" opacity="0.66"/><path clip-path="url(#lclip)" d="M305.1 268.3 q2.2 -1.5 4.4 -3.0" stroke="#2f7068" stroke-width="0.76" fill="none" opacity="0.63"/><path clip-path="url(#lclip)" d="M286.1 285.8 q3.6 -1.5 7.3 4.0" stroke="#3f827a" stroke-width="0.89" fill="none" opacity="0.52"/><path clip-path="url(#lclip)" d="M330.9 261.1 q3.4 -1.5 6.9 -2.0" stroke="#3f827a" stroke-width="1.00" fill="none" opacity="0.55"/><path clip-path="url(#lclip)" d="M337.4 266.6 q4.2 -1.5 8.4 -0.9" stroke="#2f7068" stroke-width="0.75" fill="none" opacity="0.37"/><path clip-path="url(#lclip)" d="M344.2 258.7 q3.3 -1.5 6.6 0.2" stroke="#5a988c" stroke-width="1.14" fill="none" opacity="0.68"/><path clip-path="url(#lclip)" d="M304.9 299.5 q4.9 -1.5 9.7 0.5" stroke="#5a988c" stroke-width="0.61" fill="none" opacity="0.44"/><path clip-path="url(#lclip)" d="M312.5 283.3 q4.8 -1.5 9.6 0.1" stroke="#2f7068" stroke-width="1.08" fill="none" opacity="0.61"/><path clip-path="url(#lclip)" d="M310.7 291.8 q1.9 -1.5 3.9 1.1" stroke="#2f7068" stroke-width="1.00" fill="none" opacity="0.31"/><path clip-path="url(#lclip)" d="M292.9 269.7 q4.6 -1.5 9.2 -0.7" stroke="#3f827a" stroke-width="1.05" fill="none" opacity="0.49"/><path clip-path="url(#lclip)" d="M293.2 297.9 q3.5 -1.5 7.1 -0.7" stroke="#5a988c" stroke-width="0.89" fill="none" opacity="0.68"/><path clip-path="url(#lclip)" d="M342.4 268.3 q2.3 -1.5 4.5 -1.2" stroke="#2f7068" stroke-width="0.95" fill="none" opacity="0.64"/><path clip-path="url(#lclip)" d="M297.4 276.7 q2.6 -1.5 5.1 1.5" stroke="#5a988c" stroke-width="0.61" fill="none" opacity="0.57"/><path clip-path="url(#lclip)" d="M346.5 251.2 q3.4 -1.5 6.9 -1.9" stroke="#5a988c" stroke-width="0.85" fill="none" opacity="0.57"/><path clip-path="url(#lclip)" d="M331.1 290.6 q2.1 -1.5 4.2 -1.5" stroke="#3f827a" stroke-width="0.66" fill="none" opacity="0.34"/><path clip-path="url(#lclip)" d="M275.9 272.3 q2.3 -1.5 4.6 1.0" stroke="#3f827a" stroke-width="0.78" fill="none" opacity="0.68"/><path clip-path="url(#lclip)" d="M304.1 294.4 q3.6 -1.5 7.2 -1.7" stroke="#3f827a" stroke-width="0.71" fill="none" opacity="0.45"/><path clip-path="url(#lclip)" d="M328.0 277.5 q2.1 -1.5 4.2 -0.4" stroke="#3f827a" stroke-width="1.07" fill="none" opacity="0.30"/><path clip-path="url(#lclip)" d="M309.3 253.2 q3.3 -1.5 6.6 -3.3" stroke="#3f827a" stroke-width="1.11" fill="none" opacity="0.39"/><path clip-path="url(#lclip)" d="M347.3 280.3 q4.2 -1.5 8.5 0.0" stroke="#5a988c" stroke-width="1.14" fill="none" opacity="0.42"/><path clip-path="url(#lclip)" d="M312.2 277.5 q4.7 -1.5 9.5 1.2" stroke="#3f827a" stroke-width="0.93" fill="none" opacity="0.32"/><path clip-path="url(#lclip)" d="M319.2 266.2 q3.5 -1.5 7.0 -0.5" stroke="#5a988c" stroke-width="0.71" fill="none" opacity="0.55"/><path clip-path="url(#lclip)" d="M298.8 260.1 q2.0 -1.5 3.9 1.2" stroke="#5a988c" stroke-width="1.20" fill="none" opacity="0.34"/><path clip-path="url(#lclip)" d="M279.8 253.7 q4.4 -1.5 8.9 0.1" stroke="#5a988c" stroke-width="1.17" fill="none" opacity="0.57"/><path clip-path="url(#lclip)" d="M327.6 273.5 q3.3 -1.5 6.6 -1.6" stroke="#2f7068" stroke-width="0.64" fill="none" opacity="0.31"/><path clip-path="url(#lclip)" d="M324.3 252.1 q2.7 -1.5 5.4 -1.0" stroke="#2f7068" stroke-width="0.87" fill="none" opacity="0.39"/><path clip-path="url(#lclip)" d="M303.3 274.3 q3.8 -1.5 7.7 -0.9" stroke="#5a988c" stroke-width="0.65" fill="none" opacity="0.49"/><path clip-path="url(#lclip)" d="M311.4 285.9 q4.7 -1.5 9.3 0.5" stroke="#5a988c" stroke-width="1.00" fill="none" opacity="0.64"/><path clip-path="url(#lclip)" d="M327.1 284.1 q2.4 -1.5 4.8 -1.5" stroke="#2f7068" stroke-width="0.83" fill="none" opacity="0.55"/><path clip-path="url(#lclip)" d="M336.7 298.2 q4.7 -1.5 9.5 1.8" stroke="#2f7068" stroke-width="1.13" fill="none" opacity="0.59"/><path clip-path="url(#lclip)" d="M280.9 258.8 q3.6 -1.5 7.1 0.1" stroke="#5a988c" stroke-width="1.17" fill="none" opacity="0.60"/><path clip-path="url(#lclip)" d="M309.1 255.4 q4.9 -1.5 9.7 -0.4" stroke="#2f7068" stroke-width="0.82" fill="none" opacity="0.53"/><path clip-path="url(#lclip)" d="M288.3 254.1 q2.0 -1.5 4.1 -0.6" stroke="#5a988c" stroke-width="0.75" fill="none" opacity="0.64"/><path clip-path="url(#lclip)" d="M285.7 284.1 q2.5 -1.5 5.1 -0.7" stroke="#2f7068" stroke-width="0.69" fill="none" opacity="0.46"/><path clip-path="url(#lclip)" d="M304.5 273.0 q3.9 -1.5 7.9 -0.8" stroke="#5a988c" stroke-width="0.70" fill="none" opacity="0.45"/><path clip-path="url(#lclip)" d="M294.7 259.4 q4.0 -1.5 7.9 3.4" stroke="#5a988c" stroke-width="0.82" fill="none" opacity="0.33"/><path clip-path="url(#lclip)" d="M318.1 269.9 q3.3 -1.5 6.6 0.5" stroke="#2f7068" stroke-width="0.74" fill="none" opacity="0.30"/><path clip-path="url(#lclip)" d="M315.4 254.7 q2.2 -1.5 4.4 -2.3" stroke="#2f7068" stroke-width="0.70" fill="none" opacity="0.53"/><path clip-path="url(#lclip)" d="M343.3 271.6 q4.4 -1.5 8.8 1.1" stroke="#2f7068" stroke-width="0.71" fill="none" opacity="0.46"/><path clip-path="url(#lclip)" d="M315.9 261.3 q4.0 -1.5 8.0 2.3" stroke="#3f827a" stroke-width="1.00" fill="none" opacity="0.33"/><path clip-path="url(#lclip)" d="M307.1 291.6 q3.9 -1.5 7.8 -3.7" stroke="#5a988c" stroke-width="0.71" fill="none" opacity="0.32"/><path clip-path="url(#lclip)" d="M336.0 280.3 q3.1 -1.5 6.3 -2.7" stroke="#2f7068" stroke-width="0.69" fill="none" opacity="0.36"/><path clip-path="url(#lclip)" d="M295.9 282.0 q2.0 -1.5 4.0 0.3" stroke="#3f827a" stroke-width="1.00" fill="none" opacity="0.37"/><path clip-path="url(#lclip)" d="M281.5 291.4 q3.1 -1.5 6.1 -0.5" stroke="#5a988c" stroke-width="0.90" fill="none" opacity="0.57"/><path clip-path="url(#lclip)" d="M323.6 257.9 q2.3 -1.5 4.6 0.5" stroke="#2f7068" stroke-width="0.92" fill="none" opacity="0.46"/><path clip-path="url(#lclip)" d="M326.5 286.4 q3.0 -1.5 6.0 2.3" stroke="#3f827a" stroke-width="0.90" fill="none" opacity="0.59"/><path clip-path="url(#lclip)" d="M320.1 281.7 q3.7 -1.5 7.5 1.4" stroke="#3f827a" stroke-width="1.03" fill="none" opacity="0.50"/><path clip-path="url(#lclip)" d="M286.3 292.5 q4.0 -1.5 8.0 2.3" stroke="#3f827a" stroke-width="1.01" fill="none" opacity="0.56"/><path clip-path="url(#lclip)" d="M320.8 280.2 q2.2 -1.5 4.5 -0.8" stroke="#2f7068" stroke-width="0.83" fill="none" opacity="0.68"/><path clip-path="url(#lclip)" d="M345.2 289.7 q1.9 -1.5 3.9 -0.7" stroke="#5a988c" stroke-width="0.62" fill="none" opacity="0.45"/><path clip-path="url(#lclip)" d="M330.9 259.1 q4.6 -1.5 9.1 2.2" stroke="#5a988c" stroke-width="1.13" fill="none" opacity="0.38"/><path clip-path="url(#lclip)" d="M349.9 277.7 q4.3 -1.5 8.6 -0.2" stroke="#2f7068" stroke-width="1.15" fill="none" opacity="0.40"/><path clip-path="url(#lclip)" d="M319.6 267.6 q3.0 -1.5 6.0 -3.2" stroke="#2f7068" stroke-width="0.94" fill="none" opacity="0.70"/><path clip-path="url(#rclip)" d="M520.4 299.9 q3.6 -1.5 7.2 2.8" stroke="#5a988c" stroke-width="0.66" fill="none" opacity="0.67"/><path clip-path="url(#rclip)" d="M491.2 297.2 q3.5 -1.5 7.1 -0.2" stroke="#3f827a" stroke-width="0.70" fill="none" opacity="0.56"/><path clip-path="url(#rclip)" d="M498.0 277.4 q3.5 -1.5 6.9 0.4" stroke="#3f827a" stroke-width="0.86" fill="none" opacity="0.45"/><path clip-path="url(#rclip)" d="M488.7 268.2 q3.5 -1.5 7.0 1.0" stroke="#2f7068" stroke-width="0.72" fill="none" opacity="0.62"/><path clip-path="url(#rclip)" d="M477.2 276.3 q2.9 -1.5 5.7 0.5" stroke="#3f827a" stroke-width="0.83" fill="none" opacity="0.46"/><path clip-path="url(#rclip)" d="M452.3 286.6 q3.7 -1.5 7.4 0.8" stroke="#5a988c" stroke-width="1.10" fill="none" opacity="0.48"/><path clip-path="url(#rclip)" d="M488.5 296.0 q3.7 -1.5 7.3 0.2" stroke="#3f827a" stroke-width="0.82" fill="none" opacity="0.63"/><path clip-path="url(#rclip)" d="M489.5 277.2 q2.7 -1.5 5.5 -1.9" stroke="#5a988c" stroke-width="0.87" fill="none" opacity="0.59"/><path clip-path="url(#rclip)" d="M457.3 267.8 q2.2 -1.5 4.4 -0.9" stroke="#2f7068" stroke-width="1.08" fill="none" opacity="0.67"/><path clip-path="url(#rclip)" d="M466.9 295.0 q4.2 -1.5 8.3 -2.6" stroke="#3f827a" stroke-width="1.05" fill="none" opacity="0.40"/><path clip-path="url(#rclip)" d="M461.7 290.6 q4.5 -1.5 8.9 2.2" stroke="#5a988c" stroke-width="0.73" fill="none" opacity="0.38"/><path clip-path="url(#rclip)" d="M489.3 288.8 q2.5 -1.5 5.1 0.9" stroke="#5a988c" stroke-width="1.14" fill="none" opacity="0.67"/><path clip-path="url(#rclip)" d="M491.2 256.4 q4.5 -1.5 9.0 -0.3" stroke="#2f7068" stroke-width="0.64" fill="none" opacity="0.60"/><path clip-path="url(#rclip)" d="M497.1 279.5 q4.8 -1.5 9.6 1.6" stroke="#3f827a" stroke-width="0.96" fill="none" opacity="0.48"/><path clip-path="url(#rclip)" d="M489.5 300.3 q3.0 -1.5 5.9 -1.2" stroke="#2f7068" stroke-width="0.69" fill="none" opacity="0.46"/><path clip-path="url(#rclip)" d="M485.3 285.8 q3.9 -1.5 7.7 -1.8" stroke="#5a988c" stroke-width="0.73" fill="none" opacity="0.62"/><path clip-path="url(#rclip)" d="M453.5 285.6 q3.4 -1.5 6.7 0.3" stroke="#5a988c" stroke-width="1.05" fill="none" opacity="0.44"/><path clip-path="url(#rclip)" d="M463.6 256.6 q2.5 -1.5 5.0 1.5" stroke="#5a988c" stroke-width="0.80" fill="none" opacity="0.39"/><path clip-path="url(#rclip)" d="M455.6 264.6 q2.2 -1.5 4.3 -1.4" stroke="#3f827a" stroke-width="0.93" fill="none" opacity="0.37"/><path clip-path="url(#rclip)" d="M500.3 284.9 q2.1 -1.5 4.2 -1.3" stroke="#3f827a" stroke-width="0.72" fill="none" opacity="0.58"/><path clip-path="url(#rclip)" d="M492.4 259.9 q2.7 -1.5 5.4 -0.4" stroke="#3f827a" stroke-width="0.86" fill="none" opacity="0.62"/><path clip-path="url(#rclip)" d="M521.6 288.1 q4.4 -1.5 8.8 -0.5" stroke="#2f7068" stroke-width="0.78" fill="none" opacity="0.43"/><path clip-path="url(#rclip)" d="M520.5 272.4 q4.0 -1.5 8.0 2.0" stroke="#2f7068" stroke-width="1.06" fill="none" opacity="0.53"/><path clip-path="url(#rclip)" d="M465.7 298.6 q2.2 -1.5 4.5 0.2" stroke="#2f7068" stroke-width="1.07" fill="none" opacity="0.59"/><path clip-path="url(#rclip)" d="M491.8 263.5 q2.9 -1.5 5.8 -0.9" stroke="#2f7068" stroke-width="1.15" fill="none" opacity="0.42"/><path clip-path="url(#rclip)" d="M460.7 282.9 q3.1 -1.5 6.3 -1.8" stroke="#3f827a" stroke-width="1.05" fill="none" opacity="0.36"/><path clip-path="url(#rclip)" d="M475.1 261.2 q3.9 -1.5 7.7 -1.1" stroke="#2f7068" stroke-width="1.05" fill="none" opacity="0.63"/><path clip-path="url(#rclip)" d="M490.4 260.9 q4.9 -1.5 9.8 0.5" stroke="#3f827a" stroke-width="0.93" fill="none" opacity="0.45"/><path clip-path="url(#rclip)" d="M466.9 278.7 q2.9 -1.5 5.8 -0.4" stroke="#3f827a" stroke-width="0.86" fill="none" opacity="0.38"/><path clip-path="url(#rclip)" d="M454.4 265.9 q4.5 -1.5 9.0 1.1" stroke="#2f7068" stroke-width="0.61" fill="none" opacity="0.61"/><path clip-path="url(#rclip)" d="M515.8 300.3 q2.5 -1.5 5.0 -1.3" stroke="#3f827a" stroke-width="0.77" fill="none" opacity="0.54"/><path clip-path="url(#rclip)" d="M514.4 287.8 q3.0 -1.5 5.9 2.1" stroke="#2f7068" stroke-width="0.82" fill="none" opacity="0.66"/><path clip-path="url(#rclip)" d="M500.9 269.2 q4.2 -1.5 8.4 -1.0" stroke="#3f827a" stroke-width="1.13" fill="none" opacity="0.40"/><path clip-path="url(#rclip)" d="M526.8 271.1 q2.7 -1.5 5.4 -1.9" stroke="#3f827a" stroke-width="1.03" fill="none" opacity="0.31"/><path clip-path="url(#rclip)" d="M495.3 298.1 q2.2 -1.5 4.4 1.8" stroke="#3f827a" stroke-width="1.07" fill="none" opacity="0.65"/><path clip-path="url(#rclip)" d="M519.0 293.9 q4.9 -1.5 9.9 -0.3" stroke="#2f7068" stroke-width="0.99" fill="none" opacity="0.57"/><path clip-path="url(#rclip)" d="M467.9 263.7 q3.9 -1.5 7.8 -3.1" stroke="#3f827a" stroke-width="0.91" fill="none" opacity="0.32"/><path clip-path="url(#rclip)" d="M505.5 290.7 q2.1 -1.5 4.3 1.6" stroke="#3f827a" stroke-width="1.06" fill="none" opacity="0.32"/><path clip-path="url(#rclip)" d="M499.8 261.1 q3.5 -1.5 7.0 -0.5" stroke="#5a988c" stroke-width="0.77" fill="none" opacity="0.61"/><path clip-path="url(#rclip)" d="M523.3 281.5 q2.7 -1.5 5.3 1.2" stroke="#3f827a" stroke-width="1.02" fill="none" opacity="0.63"/><path clip-path="url(#rclip)" d="M525.5 267.8 q3.8 -1.5 7.6 -1.0" stroke="#2f7068" stroke-width="0.68" fill="none" opacity="0.44"/><path clip-path="url(#rclip)" d="M522.2 272.2 q3.4 -1.5 6.8 2.3" stroke="#3f827a" stroke-width="0.77" fill="none" opacity="0.61"/><path clip-path="url(#rclip)" d="M452.3 271.7 q2.5 -1.5 5.0 -0.4" stroke="#3f827a" stroke-width="0.63" fill="none" opacity="0.31"/><path clip-path="url(#rclip)" d="M476.4 287.4 q2.6 -1.5 5.3 0.6" stroke="#3f827a" stroke-width="1.11" fill="none" opacity="0.55"/><path clip-path="url(#rclip)" d="M464.7 291.0 q2.2 -1.5 4.4 0.7" stroke="#2f7068" stroke-width="0.80" fill="none" opacity="0.59"/><path clip-path="url(#rclip)" d="M480.8 292.6 q2.9 -1.5 5.7 -0.5" stroke="#5a988c" stroke-width="0.62" fill="none" opacity="0.42"/><path clip-path="url(#rclip)" d="M469.1 293.8 q4.1 -1.5 8.2 1.7" stroke="#5a988c" stroke-width="1.18" fill="none" opacity="0.67"/><path clip-path="url(#rclip)" d="M486.6 287.9 q3.0 -1.5 6.0 3.8" stroke="#3f827a" stroke-width="1.03" fill="none" opacity="0.48"/><path clip-path="url(#rclip)" d="M455.8 273.5 q3.2 -1.5 6.5 1.5" stroke="#3f827a" stroke-width="1.09" fill="none" opacity="0.66"/><path clip-path="url(#rclip)" d="M498.2 256.4 q4.2 -1.5 8.3 -1.3" stroke="#2f7068" stroke-width="0.91" fill="none" opacity="0.59"/><path clip-path="url(#rclip)" d="M452.1 296.8 q2.9 -1.5 5.9 4.3" stroke="#3f827a" stroke-width="0.94" fill="none" opacity="0.45"/><path clip-path="url(#rclip)" d="M497.5 274.3 q3.3 -1.5 6.6 -0.3" stroke="#5a988c" stroke-width="0.76" fill="none" opacity="0.53"/><path clip-path="url(#rclip)" d="M500.0 300.7 q2.9 -1.5 5.7 0.6" stroke="#2f7068" stroke-width="0.99" fill="none" opacity="0.52"/><path clip-path="url(#rclip)" d="M509.7 274.1 q4.2 -1.5 8.4 -0.4" stroke="#2f7068" stroke-width="0.92" fill="none" opacity="0.32"/><path clip-path="url(#rclip)" d="M457.9 265.3 q2.7 -1.5 5.4 -0.5" stroke="#3f827a" stroke-width="0.99" fill="none" opacity="0.49"/><path clip-path="url(#rclip)" d="M509.9 287.6 q2.9 -1.5 5.7 0.9" stroke="#5a988c" stroke-width="0.95" fill="none" opacity="0.49"/><path clip-path="url(#rclip)" d="M483.5 266.6 q4.6 -1.5 9.3 0.9" stroke="#3f827a" stroke-width="1.19" fill="none" opacity="0.51"/><path clip-path="url(#rclip)" d="M519.9 260.4 q4.1 -1.5 8.2 -0.9" stroke="#2f7068" stroke-width="1.10" fill="none" opacity="0.49"/><path clip-path="url(#rclip)" d="M496.8 268.4 q3.2 -1.5 6.4 1.7" stroke="#5a988c" stroke-width="1.15" fill="none" opacity="0.64"/><path clip-path="url(#rclip)" d="M494.2 258.9 q4.8 -1.5 9.7 1.5" stroke="#3f827a" stroke-width="1.02" fill="none" opacity="0.50"/></g>
<g clip-path="url(#fclip)" stroke-linecap="round"><path d="M423.4 397.7 l0.7 11.6" stroke="#356f66" stroke-width="0.82" opacity="0.51"/><path d="M374.5 380.8 l0.1 5.8" stroke="#1f5c57" stroke-width="1.10" opacity="0.39"/><path d="M348.5 264.4 l-1.2 7.0" stroke="#2a6a64" stroke-width="0.93" opacity="0.63"/><path d="M366.6 375.1 l-1.4 5.9" stroke="#1f5c57" stroke-width="0.97" opacity="0.43"/><path d="M377.0 421.7 l-0.1 11.7" stroke="#356f66" stroke-width="1.30" opacity="0.41"/><path d="M390.1 438.9 l0.4 7.1" stroke="#1f5c57" stroke-width="1.55" opacity="0.44"/><path d="M447.1 317.1 l0.5 5.0" stroke="#2a6a64" stroke-width="0.85" opacity="0.47"/><path d="M443.0 350.0 l0.6 8.4" stroke="#1f5c57" stroke-width="1.00" opacity="0.68"/><path d="M429.2 416.6 l-0.4 10.5" stroke="#356f66" stroke-width="1.47" opacity="0.51"/><path d="M374.0 376.1 l0.8 5.8" stroke="#2a6a64" stroke-width="1.08" opacity="0.47"/><path d="M431.3 403.9 l0.9 10.2" stroke="#2a6a64" stroke-width="0.83" opacity="0.68"/><path d="M352.7 300.2 l1.1 7.5" stroke="#2a6a64" stroke-width="1.54" opacity="0.54"/><path d="M433.0 387.5 l0.4 10.6" stroke="#356f66" stroke-width="1.35" opacity="0.70"/><path d="M366.6 393.8 l-1.3 9.2" stroke="#1f5c57" stroke-width="0.99" opacity="0.56"/><path d="M442.7 345.4 l1.2 5.4" stroke="#1f5c57" stroke-width="1.44" opacity="0.47"/><path d="M355.7 285.9 l-0.4 11.6" stroke="#2a6a64" stroke-width="0.89" opacity="0.50"/><path d="M351.4 272.8 l-1.3 6.0" stroke="#356f66" stroke-width="1.48" opacity="0.69"/><path d="M414.1 437.7 l-0.7 7.2" stroke="#2a6a64" stroke-width="1.12" opacity="0.40"/><path d="M423.1 412.4 l1.3 6.3" stroke="#2a6a64" stroke-width="0.94" opacity="0.52"/><path d="M444.4 273.5 l0.3 7.5" stroke="#1f5c57" stroke-width="1.41" opacity="0.48"/><path d="M426.2 414.8 l0.6 11.9" stroke="#2a6a64" stroke-width="1.32" opacity="0.55"/><path d="M364.1 348.8 l0.7 7.3" stroke="#2a6a64" stroke-width="1.45" opacity="0.58"/><path d="M445.0 325.7 l1.0 10.2" stroke="#2a6a64" stroke-width="1.54" opacity="0.41"/><path d="M409.5 440.6 l0.1 8.6" stroke="#1f5c57" stroke-width="0.96" opacity="0.48"/><path d="M454.4 313.8 l-0.3 9.7" stroke="#356f66" stroke-width="1.42" opacity="0.55"/><path d="M447.8 317.4 l-0.7 11.1" stroke="#1f5c57" stroke-width="0.96" opacity="0.56"/><path d="M355.1 302.1 l1.4 9.4" stroke="#2a6a64" stroke-width="1.58" opacity="0.41"/><path d="M359.1 282.3 l-0.1 8.4" stroke="#2a6a64" stroke-width="1.17" opacity="0.48"/><path d="M362.3 370.0 l1.5 11.3" stroke="#2a6a64" stroke-width="1.56" opacity="0.65"/><path d="M371.5 388.1 l-0.1 11.8" stroke="#2a6a64" stroke-width="0.88" opacity="0.54"/><path d="M420.1 436.1 l-1.1 7.5" stroke="#2a6a64" stroke-width="1.45" opacity="0.57"/><path d="M445.9 347.5 l-0.1 7.7" stroke="#1f5c57" stroke-width="1.57" opacity="0.56"/><path d="M421.3 412.3 l-0.5 7.7" stroke="#356f66" stroke-width="1.23" opacity="0.46"/><path d="M436.3 340.5 l-0.1 8.5" stroke="#356f66" stroke-width="1.10" opacity="0.69"/><path d="M362.9 371.0 l0.0 11.9" stroke="#2a6a64" stroke-width="0.82" opacity="0.68"/><path d="M442.9 352.0 l-1.1 8.3" stroke="#356f66" stroke-width="1.57" opacity="0.44"/><path d="M380.0 405.1 l-0.1 5.1" stroke="#2a6a64" stroke-width="0.99" opacity="0.52"/><path d="M349.2 307.0 l-1.5 6.1" stroke="#2a6a64" stroke-width="1.19" opacity="0.70"/><path d="M347.3 265.0 l-0.6 7.0" stroke="#356f66" stroke-width="1.04" opacity="0.54"/><path d="M444.3 326.0 l-1.1 10.7" stroke="#1f5c57" stroke-width="1.00" opacity="0.51"/><path d="M381.4 424.5 l-0.8 5.1" stroke="#2a6a64" stroke-width="1.28" opacity="0.59"/><path d="M417.0 419.1 l0.5 8.3" stroke="#356f66" stroke-width="0.96" opacity="0.45"/><path d="M345.5 317.6 l-0.2 10.5" stroke="#356f66" stroke-width="1.42" opacity="0.67"/><path d="M355.2 292.3 l-1.4 11.2" stroke="#356f66" stroke-width="0.92" opacity="0.56"/><path d="M348.7 274.5 l-0.9 10.7" stroke="#356f66" stroke-width="1.55" opacity="0.47"/><path d="M408.8 441.1 l-1.4 9.9" stroke="#1f5c57" stroke-width="0.98" opacity="0.58"/><path d="M366.9 392.4 l-1.3 7.0" stroke="#1f5c57" stroke-width="0.95" opacity="0.41"/><path d="M348.5 274.3 l-0.5 8.9" stroke="#356f66" stroke-width="0.86" opacity="0.37"/><path d="M378.8 397.8 l0.2 5.9" stroke="#2a6a64" stroke-width="1.35" opacity="0.52"/><path d="M419.5 433.8 l0.6 5.4" stroke="#1f5c57" stroke-width="1.25" opacity="0.59"/><path d="M418.4 428.6 l-0.7 9.3" stroke="#356f66" stroke-width="0.99" opacity="0.64"/><path d="M443.7 356.6 l-0.4 6.6" stroke="#356f66" stroke-width="1.11" opacity="0.40"/><path d="M363.4 381.9 l1.2 9.7" stroke="#1f5c57" stroke-width="1.21" opacity="0.51"/><path d="M421.1 422.5 l0.9 7.3" stroke="#1f5c57" stroke-width="1.23" opacity="0.48"/><path d="M382.5 434.9 l-0.7 10.6" stroke="#1f5c57" stroke-width="1.58" opacity="0.58"/><path d="M354.2 287.6 l0.8 7.5" stroke="#2a6a64" stroke-width="1.54" opacity="0.60"/><path d="M442.4 331.2 l-0.6 7.5" stroke="#356f66" stroke-width="1.15" opacity="0.65"/><path d="M367.1 370.5 l0.3 10.2" stroke="#1f5c57" stroke-width="0.83" opacity="0.42"/><path d="M357.9 269.2 l-0.8 8.4" stroke="#1f5c57" stroke-width="1.14" opacity="0.46"/><path d="M448.7 321.2 l0.5 6.3" stroke="#1f5c57" stroke-width="1.10" opacity="0.48"/><path d="M451.9 289.8 l-1.0 6.9" stroke="#2a6a64" stroke-width="1.34" opacity="0.36"/><path d="M357.4 325.0 l1.3 7.2" stroke="#1f5c57" stroke-width="1.34" opacity="0.52"/><path d="M354.9 283.6 l-0.5 7.0" stroke="#356f66" stroke-width="1.59" opacity="0.36"/><path d="M367.4 367.2 l-1.2 9.3" stroke="#356f66" stroke-width="1.09" opacity="0.46"/><path d="M452.4 328.1 l-0.1 12.0" stroke="#1f5c57" stroke-width="0.94" opacity="0.42"/><path d="M367.8 380.2 l1.5 11.8" stroke="#1f5c57" stroke-width="1.16" opacity="0.59"/><path d="M353.2 270.2 l-0.1 11.9" stroke="#2a6a64" stroke-width="1.55" opacity="0.60"/><path d="M381.1 426.5 l1.3 11.6" stroke="#1f5c57" stroke-width="1.32" opacity="0.52"/><path d="M357.2 270.8 l-0.4 8.1" stroke="#1f5c57" stroke-width="1.56" opacity="0.42"/><path d="M452.2 296.4 l0.9 11.5" stroke="#1f5c57" stroke-width="1.23" opacity="0.67"/><path d="M375.2 418.8 l-0.1 5.1" stroke="#2a6a64" stroke-width="1.14" opacity="0.62"/><path d="M378.5 394.8 l0.2 7.2" stroke="#1f5c57" stroke-width="1.24" opacity="0.40"/><path d="M444.7 278.0 l-0.6 10.7" stroke="#1f5c57" stroke-width="1.23" opacity="0.52"/><path d="M382.9 408.2 l0.7 9.7" stroke="#2a6a64" stroke-width="1.36" opacity="0.37"/><path d="M381.5 407.7 l1.3 11.2" stroke="#2a6a64" stroke-width="1.10" opacity="0.62"/><path d="M383.3 426.0 l-0.2 10.3" stroke="#2a6a64" stroke-width="0.91" opacity="0.59"/><path d="M375.6 395.2 l-0.9 6.9" stroke="#2a6a64" stroke-width="1.25" opacity="0.46"/><path d="M451.8 293.0 l-0.6 9.7" stroke="#1f5c57" stroke-width="1.23" opacity="0.61"/><path d="M346.2 267.0 l0.4 5.9" stroke="#2a6a64" stroke-width="1.56" opacity="0.56"/><path d="M357.7 358.5 l0.4 6.4" stroke="#1f5c57" stroke-width="1.27" opacity="0.64"/><path d="M354.0 311.1 l1.1 9.4" stroke="#2a6a64" stroke-width="1.44" opacity="0.39"/><path d="M445.9 343.6 l-1.0 9.2" stroke="#1f5c57" stroke-width="1.41" opacity="0.68"/><path d="M414.9 439.4 l0.9 5.7" stroke="#2a6a64" stroke-width="1.35" opacity="0.42"/><path d="M353.6 268.0 l-1.1 8.4" stroke="#2a6a64" stroke-width="1.17" opacity="0.42"/><path d="M352.7 317.5 l-0.9 10.4" stroke="#2a6a64" stroke-width="1.08" opacity="0.44"/><path d="M366.0 375.1 l-1.0 6.0" stroke="#2a6a64" stroke-width="1.11" opacity="0.38"/><path d="M445.5 280.1 l-0.9 11.3" stroke="#2a6a64" stroke-width="1.18" opacity="0.51"/><path d="M374.7 408.5 l-0.0 5.1" stroke="#356f66" stroke-width="1.30" opacity="0.63"/><path d="M345.9 320.1 l0.4 7.2" stroke="#2a6a64" stroke-width="1.24" opacity="0.59"/><path d="M411.2 441.8 l0.6 11.5" stroke="#356f66" stroke-width="0.85" opacity="0.40"/><path d="M444.9 328.4 l0.1 9.8" stroke="#2a6a64" stroke-width="1.03" opacity="0.36"/><path d="M428.9 373.8 l-0.3 11.6" stroke="#1f5c57" stroke-width="1.02" opacity="0.60"/><path d="M346.7 268.9 l0.6 11.7" stroke="#2a6a64" stroke-width="1.35" opacity="0.64"/><path d="M355.0 350.4 l0.5 5.8" stroke="#356f66" stroke-width="1.14" opacity="0.69"/><path d="M442.0 331.2 l-0.9 8.7" stroke="#356f66" stroke-width="1.29" opacity="0.49"/><path d="M383.9 416.3 l-1.5 9.8" stroke="#1f5c57" stroke-width="1.51" opacity="0.42"/><path d="M420.6 407.9 l1.4 5.5" stroke="#1f5c57" stroke-width="1.31" opacity="0.62"/><path d="M370.2 382.0 l-0.4 9.4" stroke="#356f66" stroke-width="1.38" opacity="0.50"/><path d="M438.9 350.4 l-0.2 6.7" stroke="#1f5c57" stroke-width="1.28" opacity="0.69"/><path d="M352.8 339.2 l-0.2 7.1" stroke="#356f66" stroke-width="0.95" opacity="0.42"/><path d="M371.4 380.3 l1.3 10.1" stroke="#2a6a64" stroke-width="0.91" opacity="0.53"/><path d="M357.5 320.3 l-1.3 9.5" stroke="#1f5c57" stroke-width="1.51" opacity="0.57"/><path d="M429.6 415.7 l-1.2 9.7" stroke="#2a6a64" stroke-width="0.92" opacity="0.57"/><path d="M364.4 367.2 l-0.8 7.3" stroke="#1f5c57" stroke-width="1.37" opacity="0.67"/><path d="M359.3 328.9 l0.5 6.4" stroke="#1f5c57" stroke-width="1.17" opacity="0.59"/><path d="M358.7 307.0 l1.5 8.3" stroke="#356f66" stroke-width="1.57" opacity="0.40"/><path d="M367.8 352.7 l1.3 11.6" stroke="#356f66" stroke-width="1.37" opacity="0.36"/><path d="M411.3 444.8 l-0.5 6.4" stroke="#1f5c57" stroke-width="1.03" opacity="0.52"/><path d="M362.4 367.3 l-1.0 7.4" stroke="#356f66" stroke-width="1.15" opacity="0.43"/><path d="M355.6 311.6 l-1.4 6.0" stroke="#356f66" stroke-width="1.18" opacity="0.69"/><path d="M425.5 418.6 l-1.1 8.2" stroke="#1f5c57" stroke-width="0.80" opacity="0.62"/><path d="M430.8 410.3 l1.4 8.9" stroke="#356f66" stroke-width="0.86" opacity="0.69"/><path d="M384.2 440.3 l1.2 8.3" stroke="#2a6a64" stroke-width="1.28" opacity="0.64"/><path d="M445.3 354.9 l0.8 7.7" stroke="#2a6a64" stroke-width="1.49" opacity="0.68"/><path d="M351.4 301.5 l-0.9 10.1" stroke="#2a6a64" stroke-width="1.53" opacity="0.48"/><path d="M376.0 425.2 l0.2 10.5" stroke="#1f5c57" stroke-width="1.60" opacity="0.43"/><path d="M453.6 296.9 l-1.5 7.5" stroke="#356f66" stroke-width="0.90" opacity="0.41"/><path d="M445.9 276.1 l-0.3 5.3" stroke="#1f5c57" stroke-width="0.96" opacity="0.36"/><path d="M415.3 437.8 l-0.8 6.0" stroke="#2a6a64" stroke-width="1.55" opacity="0.36"/><path d="M371.2 410.7 l-0.5 5.9" stroke="#2a6a64" stroke-width="1.42" opacity="0.40"/><path d="M347.0 313.9 l0.6 7.8" stroke="#2a6a64" stroke-width="1.24" opacity="0.51"/><path d="M379.5 438.6 l1.5 5.1" stroke="#2a6a64" stroke-width="0.91" opacity="0.52"/><path d="M356.3 263.5 l-0.0 7.9" stroke="#356f66" stroke-width="0.99" opacity="0.46"/><path d="M350.9 269.0 l1.4 7.4" stroke="#2a6a64" stroke-width="1.15" opacity="0.39"/><path d="M380.7 431.2 l-0.6 8.7" stroke="#356f66" stroke-width="1.56" opacity="0.70"/><path d="M421.0 417.0 l0.4 9.8" stroke="#1f5c57" stroke-width="1.39" opacity="0.54"/><path d="M448.3 280.0 l-0.4 10.7" stroke="#2a6a64" stroke-width="0.91" opacity="0.47"/><path d="M447.6 262.7 l-1.4 9.0" stroke="#356f66" stroke-width="0.87" opacity="0.47"/><path d="M353.1 330.5 l0.0 10.7" stroke="#1f5c57" stroke-width="1.39" opacity="0.44"/><path d="M366.2 376.5 l0.8 9.4" stroke="#2a6a64" stroke-width="1.27" opacity="0.66"/><path d="M367.1 370.7 l0.4 11.3" stroke="#1f5c57" stroke-width="0.81" opacity="0.37"/><path d="M428.8 385.3 l-0.3 5.2" stroke="#2a6a64" stroke-width="1.38" opacity="0.56"/><path d="M366.1 360.2 l-0.7 9.9" stroke="#356f66" stroke-width="0.87" opacity="0.37"/><path d="M448.2 317.6 l1.0 8.8" stroke="#356f66" stroke-width="1.34" opacity="0.45"/><path d="M430.3 400.1 l-1.5 7.1" stroke="#2a6a64" stroke-width="1.21" opacity="0.67"/><path d="M443.2 331.7 l-0.6 11.6" stroke="#356f66" stroke-width="0.96" opacity="0.38"/><path d="M413.1 443.9 l0.1 8.1" stroke="#2a6a64" stroke-width="0.94" opacity="0.40"/><path d="M448.5 293.1 l-0.5 11.5" stroke="#1f5c57" stroke-width="0.92" opacity="0.44"/><path d="M433.0 354.0 l-0.8 6.5" stroke="#1f5c57" stroke-width="1.14" opacity="0.62"/><path d="M454.0 315.7 l-0.4 6.8" stroke="#356f66" stroke-width="1.01" opacity="0.57"/><path d="M378.7 437.0 l0.5 10.4" stroke="#1f5c57" stroke-width="1.50" opacity="0.45"/><path d="M359.1 271.1 l-0.4 7.7" stroke="#356f66" stroke-width="1.41" opacity="0.38"/><path d="M423.2 423.5 l-0.5 7.0" stroke="#2a6a64" stroke-width="0.85" opacity="0.46"/><path d="M346.8 269.2 l-1.4 10.2" stroke="#2a6a64" stroke-width="0.88" opacity="0.50"/><path d="M363.8 339.2 l-0.5 8.8" stroke="#356f66" stroke-width="1.21" opacity="0.68"/><path d="M354.3 347.3 l1.2 10.4" stroke="#356f66" stroke-width="0.88" opacity="0.58"/><path d="M445.7 342.1 l1.4 8.9" stroke="#2a6a64" stroke-width="0.83" opacity="0.66"/><path d="M357.6 331.9 l0.5 11.4" stroke="#356f66" stroke-width="1.22" opacity="0.40"/><path d="M381.1 418.6 l-0.2 7.1" stroke="#356f66" stroke-width="1.31" opacity="0.44"/><path d="M370.2 398.2 l-0.8 8.3" stroke="#356f66" stroke-width="0.88" opacity="0.56"/><path d="M426.6 389.2 l1.5 5.7" stroke="#1f5c57" stroke-width="1.00" opacity="0.57"/><path d="M449.0 309.0 l0.9 9.7" stroke="#2a6a64" stroke-width="0.88" opacity="0.55"/><path d="M430.4 376.9 l0.2 8.8" stroke="#1f5c57" stroke-width="1.41" opacity="0.47"/><path d="M432.7 379.0 l1.3 11.1" stroke="#2a6a64" stroke-width="1.28" opacity="0.37"/><path d="M449.6 286.3 l1.4 7.9" stroke="#1f5c57" stroke-width="1.03" opacity="0.42"/><path d="M358.7 262.2 l-1.1 7.2" stroke="#356f66" stroke-width="1.03" opacity="0.64"/><path d="M444.1 324.2 l0.6 8.5" stroke="#356f66" stroke-width="1.43" opacity="0.35"/><path d="M431.4 381.3 l-0.1 8.4" stroke="#2a6a64" stroke-width="0.83" opacity="0.54"/><path d="M412.9 439.7 l-1.0 6.2" stroke="#356f66" stroke-width="0.99" opacity="0.64"/><path d="M357.9 332.4 l0.7 6.6" stroke="#1f5c57" stroke-width="0.96" opacity="0.43"/></g>
</svg>
<svg class="a" style="left:0;top:49px" width="705" height="584" viewBox="0 49 705 584">
<line x1="236.7" y1="74" x2="236.7" y2="299" stroke="#6a5520" stroke-width="1.4"/>
<line x1="236.7" y1="74" x2="236.7" y2="299" stroke="#ecd048" stroke-width="2.8" stroke-dasharray="0 7.5" stroke-linecap="round"/>
<line x1="97.8" y1="367" x2="97.8" y2="633" stroke="#6a5520" stroke-width="1.4"/>
<line x1="97.8" y1="367" x2="97.8" y2="633" stroke="#ecd048" stroke-width="2.8" stroke-dasharray="0 7.5" stroke-linecap="round"/>
<line x1="0" y1="299.5" x2="81.5" y2="299.5" stroke="#6a5520" stroke-width="1.4"/>
<line x1="0" y1="299.5" x2="81.5" y2="299.5" stroke="#ecd048" stroke-width="2.8" stroke-dasharray="0 7.5" stroke-linecap="round"/>
<rect x="232" y="62.8" width="10" height="10" fill="#141414" stroke="#d6dc6a" stroke-width="2"/>
<circle cx="236.6" cy="66.8" r="1.5" fill="#d6dc6a"/>
<rect x="77.0" y="273.8" width="10" height="10" fill="#6a5a10" opacity="0.8"/>
<rect x="76.5" y="273.3" width="10" height="10" fill="#e4d21e"/>
<rect x="77.0" y="316.4" width="10" height="10" fill="#6a5a10" opacity="0.8"/>
<rect x="76.5" y="315.9" width="10" height="10" fill="#e4d21e"/>
<rect x="176.7" y="273.8" width="10" height="10" fill="#6a5a10" opacity="0.8"/>
<rect x="176.2" y="273.3" width="10" height="10" fill="#e4d21e"/>
<rect x="176.7" y="316.4" width="10" height="10" fill="#6a5a10" opacity="0.8"/>
<rect x="176.2" y="315.9" width="10" height="10" fill="#e4d21e"/>
<rect x="204.0" y="273.8" width="10" height="10" fill="#6a5a10" opacity="0.8"/>
<rect x="203.5" y="273.3" width="10" height="10" fill="#e4d21e"/>
<rect x="204.0" y="316.4" width="10" height="10" fill="#6a5a10" opacity="0.8"/>
<rect x="203.5" y="315.9" width="10" height="10" fill="#e4d21e"/>
<rect x="233.3" y="273.8" width="10" height="10" fill="#6a5a10" opacity="0.8"/>
<rect x="232.8" y="273.3" width="10" height="10" fill="#e4d21e"/>
<rect x="233.3" y="316.4" width="10" height="10" fill="#6a5a10" opacity="0.8"/>
<rect x="232.8" y="315.9" width="10" height="10" fill="#e4d21e"/>
<rect x="261.9" y="273.8" width="10" height="10" fill="#6a5a10" opacity="0.8"/>
<rect x="261.4" y="273.3" width="10" height="10" fill="#e4d21e"/>
<rect x="261.9" y="316.4" width="10" height="10" fill="#6a5a10" opacity="0.8"/>
<rect x="261.4" y="315.9" width="10" height="10" fill="#e4d21e"/>
<rect x="176.7" y="294.0" width="10" height="10" fill="#6a5a10" opacity="0.8"/>
<rect x="176.2" y="293.5" width="10" height="10" fill="#e4d21e"/>
<rect x="204.0" y="294.0" width="10" height="10" fill="#6a5a10" opacity="0.8"/>
<rect x="203.5" y="293.5" width="10" height="10" fill="#e4d21e"/>
<rect x="261.9" y="294.0" width="10" height="10" fill="#6a5a10" opacity="0.8"/>
<rect x="261.4" y="293.5" width="10" height="10" fill="#e4d21e"/>
<rect x="94.5" y="310.0" width="10" height="10" fill="#6a5a10" opacity="0.8"/>
<rect x="94" y="309.5" width="10" height="10" fill="#e4d21e"/>
<rect x="323.5" y="309.5" width="10" height="10" fill="#6a5a10" opacity="0.8"/>
<rect x="323" y="309" width="10" height="10" fill="#e4d21e"/>
<rect x="323.5" y="362.5" width="10" height="10" fill="#6a5a10" opacity="0.8"/>
<rect x="323" y="362" width="10" height="10" fill="#e4d21e"/>
<rect x="323.5" y="415.5" width="10" height="10" fill="#6a5a10" opacity="0.8"/>
<rect x="323" y="415" width="10" height="10" fill="#e4d21e"/>
<rect x="94.5" y="415.5" width="10" height="10" fill="#6a5a10" opacity="0.8"/>
<rect x="94" y="415" width="10" height="10" fill="#e4d21e"/>
<circle cx="81.5" cy="299.5" r="7" fill="#e8e27a" opacity="0.45"/>
<circle cx="81.5" cy="299.5" r="4.6" fill="#e8e27a" stroke="#9a8a30" stroke-width="1"/>
<path d="M73.5 299.5 H89.5 M81.5 291.5 V307.5" stroke="#3a3010" stroke-width="0.8" opacity="0.6"/>
<circle cx="237.8" cy="298.5" r="7" fill="#e8e27a" opacity="0.45"/>
<circle cx="237.8" cy="298.5" r="4.6" fill="#e8e27a" stroke="#9a8a30" stroke-width="1"/>
<path d="M229.8 298.5 H245.8 M237.8 290.5 V306.5" stroke="#3a3010" stroke-width="0.8" opacity="0.6"/>
<circle cx="98.3" cy="367" r="7" fill="#e8e27a" opacity="0.45"/>
<circle cx="98.3" cy="367" r="4.6" fill="#e8e27a" stroke="#9a8a30" stroke-width="1"/>
<path d="M90.3 367 H106.3 M98.3 359 V375" stroke="#3a3010" stroke-width="0.8" opacity="0.6"/>
<rect x="267.5" y="200.2" width="10" height="10" fill="#0c3a18" opacity="0.7"/>
<rect x="267" y="199.7" width="9.5" height="9.5" fill="#1ea044"/>
<rect x="267.5" y="452.9" width="10" height="10" fill="#0c3a18" opacity="0.7"/>
<rect x="267" y="452.4" width="9.5" height="9.5" fill="#1ea044"/>
<rect x="396.5" y="200.2" width="10" height="10" fill="#0c3a18" opacity="0.7"/>
<rect x="396" y="199.7" width="9.5" height="9.5" fill="#1ea044"/>
<rect x="396.5" y="452.9" width="10" height="10" fill="#0c3a18" opacity="0.7"/>
<rect x="396" y="452.4" width="9.5" height="9.5" fill="#1ea044"/>
<rect x="524.9" y="200.2" width="10" height="10" fill="#0c3a18" opacity="0.7"/>
<rect x="524.4" y="199.7" width="9.5" height="9.5" fill="#1ea044"/>
<rect x="524.9" y="452.9" width="10" height="10" fill="#0c3a18" opacity="0.7"/>
<rect x="524.4" y="452.4" width="9.5" height="9.5" fill="#1ea044"/>
<rect x="267.5" y="327.0" width="10" height="10" fill="#0c3a18" opacity="0.7"/>
<rect x="267" y="326.5" width="9.5" height="9.5" fill="#1ea044"/>
<rect x="524.9" y="327.0" width="10" height="10" fill="#0c3a18" opacity="0.7"/>
<rect x="524.4" y="326.5" width="9.5" height="9.5" fill="#1ea044"/>
<g stroke="#8a9a70" stroke-width="1.2" fill="none"><circle cx="399.7" cy="330" r="4.5"/><path d="M399.7 335 V341 M404 331 H409"/></g>
</svg>
<svg class="a" style="left:0;top:634px" width="705" height="33" viewBox="0 634 705 33">
<rect x="9.5" y="645.5" width="17" height="13" fill="#1c1c1c"/>
<rect x="9.50" y="649.83" width="4.25" height="4.33" fill="#7c7c7c"/>
<rect x="13.75" y="645.50" width="4.25" height="4.33" fill="#7c7c7c"/>
<rect x="13.75" y="654.17" width="4.25" height="4.33" fill="#7c7c7c"/>
<rect x="18.00" y="649.83" width="4.25" height="4.33" fill="#7c7c7c"/>
<rect x="22.25" y="645.50" width="4.25" height="4.33" fill="#7c7c7c"/>
<rect x="22.25" y="654.17" width="4.25" height="4.33" fill="#7c7c7c"/>
<rect x="9.5" y="645.5" width="17" height="13" fill="none" stroke="#c9c9c9" stroke-width="1.4"/>
<rect x="36" y="639" width="26" height="25.5" rx="4" fill="#4a4a4a"/>
<path d="M48 645 L57 645.3 L57 658 L41 658 L41 651.4 Z" fill="none" stroke="#c9c9c9" stroke-width="1.4"/>
<circle cx="48" cy="645" r="1.5" fill="#c9c9c9"/>
<circle cx="57" cy="645.3" r="1.5" fill="#c9c9c9"/>
<circle cx="57" cy="658" r="1.5" fill="#c9c9c9"/>
<circle cx="41" cy="658" r="1.5" fill="#c9c9c9"/>
<circle cx="41" cy="651.4" r="1.5" fill="#c9c9c9"/>
<rect x="71.7" y="644.5" width="17" height="14.5" fill="none" stroke="#c9c9c9" stroke-width="1.4"/>
<rect x="76" y="648.5" width="8.5" height="6.5" fill="#c9c9c9"/>
<rect x="102.5" y="645" width="16" height="11" fill="none" stroke="#c9c9c9" stroke-width="1.3"/>
<path d="M110.5 643 V647 M110.5 654 V658 M100.5 650.5 H104.5 M116.5 650.5 H120.5 M108.5 650.5 H112.5 M110.5 648.5 V652.5" stroke="#c9c9c9" stroke-width="1.2"/>
<path d="M113.5 658.5 H118.5 L116 661.5 Z" fill="#c9c9c9"/>
<rect x="134.3" y="642" width="2.4" height="19" fill="#121212"/>
<rect x="263.8" y="642" width="2.4" height="19" fill="#121212"/>
<rect x="344.3" y="642" width="2.4" height="19" fill="#121212"/>
<rect x="457.3" y="642" width="2.4" height="19" fill="#121212"/>
<circle cx="159.3" cy="646.3" r="3.8" fill="#e52222"/>
<circle cx="156" cy="652.5" r="3.8" fill="#1fb43a"/>
<circle cx="163.3" cy="652.2" r="3.8" fill="#3d6ff0"/>
<path d="M161.5 658 H169 L165.25 661.8 Z" fill="#c9c9c9"/>
<circle cx="191.2" cy="651.8" r="7.6" fill="#c9c9c9"/>
<g fill="#1e1e1e">
<path d="M193.80 651.80 L196.17 658.07" stroke="#1e1e1e" stroke-width="1.1"/>
<path d="M192.50 654.05 L188.26 659.24" stroke="#1e1e1e" stroke-width="1.1"/>
<path d="M189.90 654.05 L183.29 652.97" stroke="#1e1e1e" stroke-width="1.1"/>
<path d="M188.60 651.80 L186.23 645.53" stroke="#1e1e1e" stroke-width="1.1"/>
<path d="M189.90 649.55 L194.14 644.36" stroke="#1e1e1e" stroke-width="1.1"/>
<path d="M192.50 649.55 L199.11 650.63" stroke="#1e1e1e" stroke-width="1.1"/>
<circle cx="191.2" cy="651.8" r="2.6"/>
</g>
<path d="M280.5 648 H285 L286.5 645.5 H292.5 L294 648 H299 V659.5 H280.5 Z" fill="#c9c9c9"/>
<circle cx="289.7" cy="653.5" r="3.3" fill="#1e1e1e"/>
<circle cx="289.7" cy="653.5" r="1.6" fill="#c9c9c9"/>
<path d="M310.5 653.5 Q320 645 329.5 653.5 Q320 662 310.5 653.5 Z" fill="#7a7a7a"/>
<circle cx="320" cy="653.5" r="3.2" fill="#1e1e1e"/>
<circle cx="320" cy="653.5" r="1.6" fill="#7a7a7a"/>
<path d="M320.5 645 H323 L324 643.2 H327.5 L328.5 645 H331 V651 H320.5 Z" fill="#7a7a7a"/>
<circle cx="325.7" cy="648" r="1.6" fill="#1e1e1e"/>
<rect x="358.5" y="640.5" width="87" height="23" rx="4" fill="#121212" stroke="#2a2a2a" stroke-width="1"/>
</svg>
<div class="t" style="left:211px;top:646px;font-size:15px;color:#4a8fe0">+0.0</div>
<div class="t" style="left:369px;top:644.5px;font-size:15px;letter-spacing:-0.55px;color:#cacaca">0;00;03;00</div>
<div class="a" style="left:3px;top:710px;width:669px;height:58px;background:#222222;"></div>
<div class="a" style="left:672px;top:710px;width:9px;height:58px;background:#1b1b1b;"></div>
<div class="a" style="left:12px;top:711px;width:127px;height:11px;background:#777777;"></div>
<div class="a" style="left:4px;top:711px;width:9px;height:11px;background:#1a8cff;border-radius:5px 0 0 5px"></div>
<div class="a" style="left:138px;top:711px;width:10px;height:11px;background:#1a8cff;border-radius:0 5px 5px 0"></div>
<div class="a" style="left:79px;top:712px;width:2px;height:9px;background:#7f9cc8;"></div>
<div class="t" style="left:-42.9px;top:724px;width:120px;text-align:center;font-size:16px;color:#c8c8c8">0:00s</div>
<div class="a" style="left:14px;top:739px;width:1px;height:8px;background:#bdbdbd;"></div>
<div class="t" style="left:69.0px;top:724px;width:120px;text-align:center;font-size:16px;color:#c8c8c8">01s</div>
<div class="a" style="left:130px;top:739px;width:1px;height:8px;background:#bdbdbd;"></div>
<div class="t" style="left:185.2px;top:724px;width:120px;text-align:center;font-size:16px;color:#c8c8c8">02s</div>
<div class="a" style="left:246px;top:739px;width:1px;height:8px;background:#bdbdbd;"></div>
<div class="t" style="left:301.4px;top:724px;width:120px;text-align:center;font-size:16px;color:#c8c8c8">03s</div>
<div class="a" style="left:362px;top:739px;width:1px;height:8px;background:#bdbdbd;"></div>
<div class="t" style="left:417.6px;top:724px;width:120px;text-align:center;font-size:16px;color:#c8c8c8">04s</div>
<div class="a" style="left:478px;top:739px;width:1px;height:8px;background:#bdbdbd;"></div>
<div class="t" style="left:533.8px;top:724px;width:120px;text-align:center;font-size:16px;color:#c8c8c8">05s</div>
<div class="a" style="left:595px;top:741px;width:2px;height:14px;background:#bdbdbd;"></div>
<div class="a" style="left:0px;top:710px;width:3px;height:58px;background:#1e1e1e;"></div>
<div class="a" style="left:13px;top:748px;width:504px;height:20px;background:#6b6b6b;"></div>
<div class="a" style="left:5px;top:748px;width:8px;height:20px;background:#1a8cff;border-radius:5px 0 0 5px"></div>
<div class="a" style="left:517px;top:748px;width:7px;height:20px;background:#1a8cff;border-radius:0 4px 4px 0"></div>
<div class="a" style="left:13px;top:769px;width:668px;height:4px;background:#14b814;"></div>
<div class="a" style="left:13px;top:773px;width:668px;height:2px;background:#0a1a0a;"></div>
<div class="a" style="left:0px;top:769px;width:3px;height:255px;background:#1e1e1e;"></div>
<div class="a" style="left:3px;top:769px;width:1px;height:255px;background:#000;"></div>
<div class="a" style="left:0px;top:775.5px;width:13px;height:21px;background:#4c4c4c;"></div>
<div class="a" style="left:13px;top:775.5px;width:668px;height:21px;background:linear-gradient(#dad25e,#d2c954 60%,#ccc250);box-shadow:inset 0 1px 0 #e6e29a"></div>
<div class="a" style="left:0px;top:796.5px;width:681px;height:1.5px;background:#121212;"></div>
<div class="a" style="left:4px;top:798.5px;width:513px;height:24px;background:#262626;"></div>
<div class="a" style="left:4px;top:798.5px;width:9px;height:24px;background:#212121;"></div>
<div class="a" style="left:517px;top:798.5px;width:164px;height:24px;background:#1f1f1f;"></div>
<div class="a" style="left:0px;top:822.5px;width:681px;height:1px;background:#141414;"></div>
<div class="a" style="left:0px;top:824.5px;width:32px;height:21.5px;background:#4c4c4c;"></div>
<div class="a" style="left:32px;top:824.5px;width:649px;height:21.5px;background:linear-gradient(#dad25e,#d2c954 60%,#ccc250);box-shadow:inset 0 1px 0 #e6e29a"></div>
<div class="a" style="left:0px;top:846.0px;width:681px;height:1.5px;background:#121212;"></div>
<div class="a" style="left:4px;top:847px;width:513px;height:25px;background:#262626;"></div>
<div class="a" style="left:4px;top:847px;width:9px;height:25px;background:#212121;"></div>
<div class="a" style="left:517px;top:847px;width:164px;height:25px;background:#1f1f1f;"></div>
<div class="a" style="left:0px;top:872px;width:681px;height:1px;background:#141414;"></div>
<div class="a" style="left:0px;top:873px;width:52px;height:23px;background:#4c4c4c;"></div>
<div class="a" style="left:52px;top:873px;width:629px;height:23px;background:linear-gradient(#53a053,#4c954c);box-shadow:inset 0 1px 0 #8fcf8f"></div>
<div class="a" style="left:0px;top:896px;width:681px;height:1.5px;background:#121212;"></div>
<div class="a" style="left:4px;top:897px;width:513px;height:24px;background:#262626;"></div>
<div class="a" style="left:4px;top:897px;width:9px;height:24px;background:#212121;"></div>
<div class="a" style="left:517px;top:897px;width:164px;height:24px;background:#1f1f1f;"></div>
<div class="a" style="left:0px;top:921px;width:681px;height:1px;background:#141414;"></div>
<div class="a" style="left:4px;top:922px;width:513px;height:23.5px;background:#262626;"></div>
<div class="a" style="left:4px;top:922px;width:9px;height:23.5px;background:#212121;"></div>
<div class="a" style="left:517px;top:922px;width:164px;height:23.5px;background:#1f1f1f;"></div>
<div class="a" style="left:0px;top:945.5px;width:681px;height:1px;background:#141414;"></div>
<div class="a" style="left:4px;top:946.5px;width:513px;height:24px;background:#262626;"></div>
<div class="a" style="left:4px;top:946.5px;width:9px;height:24px;background:#212121;"></div>
<div class="a" style="left:517px;top:946.5px;width:164px;height:24px;background:#1f1f1f;"></div>
<div class="a" style="left:0px;top:970.5px;width:681px;height:1px;background:#141414;"></div>
<div class="a" style="left:0px;top:971px;width:71px;height:23px;background:#4c4c4c;"></div>
<div class="a" style="left:71px;top:971px;width:610px;height:23px;background:linear-gradient(#dad25e,#d2c954 60%,#ccc250);box-shadow:inset 0 1px 0 #e6e29a"></div>
<div class="a" style="left:0px;top:994px;width:681px;height:1.5px;background:#121212;"></div>
<div class="a" style="left:4px;top:995px;width:513px;height:24.5px;background:#262626;"></div>
<div class="a" style="left:4px;top:995px;width:9px;height:24.5px;background:#212121;"></div>
<div class="a" style="left:517px;top:995px;width:164px;height:24.5px;background:#1f1f1f;"></div>
<div class="a" style="left:0px;top:1019.5px;width:681px;height:1px;background:#141414;"></div>
<div class="a" style="left:3px;top:769px;width:1px;height:255px;background:#000;"></div>
<div class="a" style="left:13px;top:1020px;width:668px;height:4px;background:#8a8a9a;"></div>
<div class="a" style="left:4px;top:1020px;width:9px;height:4px;background:#3a3a3a;"></div>
<div class="a" style="left:9.6px;top:806.5px;width:8px;height:8px;transform:rotate(45deg);background:linear-gradient(45deg,#8c8c8c 50%,#cfcfcf 50%)"></div>
<div class="a" style="left:125.7px;top:806.5px;width:8px;height:8px;transform:rotate(45deg);background:linear-gradient(45deg,#8c8c8c 50%,#cfcfcf 50%)"></div>
<div class="a" style="left:29.0px;top:855.5px;width:8px;height:8px;transform:rotate(45deg);background:linear-gradient(45deg,#8c8c8c 50%,#cfcfcf 50%)"></div>
<div class="a" style="left:145.3px;top:855.5px;width:8px;height:8px;transform:rotate(45deg);background:linear-gradient(45deg,#8c8c8c 50%,#cfcfcf 50%)"></div>
<div class="a" style="left:48.3px;top:929.8px;width:8px;height:8px;transform:rotate(45deg);background:linear-gradient(45deg,#8c8c8c 50%,#cfcfcf 50%)"></div>
<div class="a" style="left:164.7px;top:929.8px;width:8px;height:8px;transform:rotate(45deg);background:linear-gradient(45deg,#8c8c8c 50%,#cfcfcf 50%)"></div>
<div class="a" style="left:48.3px;top:954.5px;width:8px;height:8px;transform:rotate(45deg);background:linear-gradient(45deg,#8c8c8c 50%,#cfcfcf 50%)"></div>
<div class="a" style="left:164.7px;top:954.5px;width:8px;height:8px;transform:rotate(45deg);background:linear-gradient(45deg,#8c8c8c 50%,#cfcfcf 50%)"></div>
<div class="a" style="left:68.0px;top:1003.2px;width:8px;height:8px;transform:rotate(45deg);background:linear-gradient(45deg,#8c8c8c 50%,#cfcfcf 50%)"></div>
<div class="a" style="left:183.6px;top:1003.2px;width:8px;height:8px;transform:rotate(45deg);background:linear-gradient(45deg,#8c8c8c 50%,#cfcfcf 50%)"></div>
<div class="a" style="left:362px;top:728px;width:1px;height:296px;background:#4a90e2;"></div>
<div class="a" style="left:355.5px;top:803.5px;width:12px;height:12px;transform:rotate(45deg);border:2px solid #5a8fd6;box-sizing:content-box;width:10px;height:10px;background:linear-gradient(45deg,#c8c8c8 50%,#7d7d7d 50%)"></div>
<div class="a" style="left:355.5px;top:852.5px;width:12px;height:12px;transform:rotate(45deg);border:2px solid #5a8fd6;box-sizing:content-box;width:10px;height:10px;background:linear-gradient(45deg,#c8c8c8 50%,#7d7d7d 50%)"></div>
<div class="a" style="left:355.5px;top:902.0px;width:12px;height:12px;transform:rotate(45deg);border:2px solid #5a8fd6;box-sizing:content-box;width:10px;height:10px;background:linear-gradient(45deg,#c8c8c8 50%,#7d7d7d 50%)"></div>
<div class="a" style="left:355.5px;top:1000.2px;width:12px;height:12px;transform:rotate(45deg);border:2px solid #5a8fd6;box-sizing:content-box;width:10px;height:10px;background:linear-gradient(45deg,#c8c8c8 50%,#7d7d7d 50%)"></div>
<div class="a" style="left:362px;top:728px;width:1px;height:296px;background:#4a90e2;"></div>
<svg class="a" style="left:354px;top:727px" width="17" height="21"><path d="M1.5 1.5 H15.5 V10 L8.5 19 L1.5 10 Z" fill="#3d8ef2"/></svg>
<div class="a" style="left:330px;top:718px;width:54px;height:34px;border:4px solid #ec3a20"></div>
<svg class="a" style="left:685px;top:750px" width="18" height="22"><path d="M1.5 1 H16 V12 L8.75 20 L1.5 12 Z" fill="#c4c4c4"/></svg>
<svg class="a" style="left:684px;top:777px" width="20" height="18"><rect x="9" y="3" width="9" height="9" fill="#c4c4c4"/><path d="M2 10 L9 2" stroke="#c4c4c4" stroke-width="1.6" fill="none"/><path d="M2 10 H10" stroke="#c4c4c4" stroke-width="1.6"/><circle cx="7.5" cy="12.5" r="3.6" fill="#1e1e1e" stroke="#c4c4c4" stroke-width="1.6"/></svg>
<div class="a" style="left:687px;top:801px;width:11px;height:184px;background:#494949;border-radius:6px"></div>
<svg class="a" style="left:760px;top:0" width="160" height="34" viewBox="760 0 160 34">
<g fill="#bdbdbd">
<rect x="770" y="9.5" width="2.6" height="11.5"/><path d="M786.5 9.5 V21 L774 15.25 Z"/>
<path d="M812.5 9.5 V21 L800 15.25 Z"/><rect x="813.8" y="9.5" width="2.6" height="11.5"/>
<path d="M834 9 V21.5 L846.5 15.25 Z"/>
<rect x="862.8" y="9.5" width="2.6" height="11.5"/><path d="M866.8 9.5 V21 L879.3 15.25 Z"/>
<path d="M894.8 9.5 V21 L907.3 15.25 Z"/><rect x="908.3" y="9.5" width="2.6" height="11.5"/>
</g></svg>
<div class="t" style="left:727px;top:46px;font-size:15px;font-weight:500;color:#c9c9c9">プロパティ<span style="margin:0 4px 0 2px">:</span>4 個のレイヤーを選択</div>
<div class="t" style="left:726px;top:74px;font-size:15px;font-weight:bold;color:#c9c9c9">レイヤートランス...</div>
<div class="t" style="left:885px;top:75px;font-size:15px;color:#4a8fe0">リセット</div>
<div class="t" style="left:787px;top:99px;font-size:15px;font-weight:500;color:#c9c9c9">アンカー...</div>
<div class="t" style="left:787px;top:125px;font-size:15px;font-weight:500;color:#c9c9c9">位置</div>
<div class="t" style="left:787px;top:151px;font-size:15px;font-weight:500;color:#c9c9c9">スケール</div>
<div class="t" style="left:787px;top:178px;font-size:15px;font-weight:500;color:#c9c9c9">回転</div>
<div class="t" style="left:787px;top:204px;font-size:15px;font-weight:500;color:#c9c9c9">不透明度</div>
<div class="t" style="left:726px;top:254px;font-size:15px;font-weight:500;color:#c4c4c4">整列</div>
<div class="t" style="left:726px;top:288px;font-size:15px;font-weight:500;color:#c4c4c4">オーディオ</div>
<div class="t" style="left:726px;top:321.5px;font-size:15px;font-weight:500;letter-spacing:0.3px;color:#c4c4c4">エフェクト＆プリセット</div>
<svg class="a" style="left:710px;top:90px" width="292" height="150" viewBox="710 90 292 150">
<circle cx="748" cy="108.5" r="6" fill="none" stroke="#c4c4c4" stroke-width="1.5"/>
<path d="M745 99.7 H751 M748 99.7 V102.5" stroke="#c4c4c4" stroke-width="1.5"/>
<circle cx="748" cy="213" r="6" fill="none" stroke="#c4c4c4" stroke-width="1.5"/>
<path d="M745 204.2 H751 M748 204.2 V207" stroke="#c4c4c4" stroke-width="1.5"/>
<path d="M734.7 128.5 V139.5 L726.8 134 Z" fill="#b4b4b4"/>
<path d="M761 128.5 V139.5 L769.4 134 Z" fill="#6e6e6e"/>
<path d="M748 128 L754 134 L748 140 L742 134 Z" fill="#4a9af0"/>
<path d="M734.7 154.0 V165.0 L726.8 159.5 Z" fill="#b4b4b4"/>
<path d="M761 154.0 V165.0 L769.4 159.5 Z" fill="#6e6e6e"/>
<path d="M748 154.5 L753 159.5 L748 164.5 L743 159.5 Z" fill="none" stroke="#c8c8c8" stroke-width="1.4"/>
<path d="M734.7 180.5 V191.5 L726.8 186 Z" fill="#b4b4b4"/>
<path d="M761 180.5 V191.5 L769.4 186 Z" fill="#6e6e6e"/>
<path d="M748 181 L753 186 L748 191 L743 186 Z" fill="none" stroke="#c8c8c8" stroke-width="1.4"/>
<rect x="720" y="117.5" width="59" height="34.5" fill="none" stroke="#ee3520" stroke-width="4"/>
<g fill="none" stroke="#4a8fe0" stroke-width="2.2"><rect x="854.5" y="156.5" width="9" height="6.5" rx="3.2"/><rect x="861.5" y="156.5" width="9" height="6.5" rx="3.2"/></g>
<rect x="882" y="119.5" width="44" height="1.2" fill="#5c5c5c"/>
<rect x="939.5" y="119.5" width="44" height="1.2" fill="#5c5c5c"/>
<rect x="882" y="145.5" width="44" height="1.2" fill="#5c5c5c"/>
<rect x="939.5" y="145.5" width="44" height="1.2" fill="#5c5c5c"/>
<rect x="882" y="171" width="44" height="1.2" fill="#5c5c5c"/>
<rect x="939.5" y="171" width="44" height="1.2" fill="#5c5c5c"/>
<rect x="882" y="196.5" width="69" height="1.2" fill="#5c5c5c"/>
<rect x="882" y="222.8" width="50.5" height="1.2" fill="#5c5c5c"/>
<rect x="884.5" y="110" width="6.5" height="1.6" fill="#4a8fe0"/>
<rect x="942" y="110" width="6.5" height="1.6" fill="#4a8fe0"/>
<rect x="884.5" y="136" width="6.5" height="1.6" fill="#4a8fe0"/>
<rect x="942" y="136" width="6.5" height="1.6" fill="#4a8fe0"/>
</svg>
<div class="t" style="left:884.5px;top:154.5px;font-size:14.5px;color:#4a8fe0">100<span style="color:#c9c9c9">%</span></div>
<div class="t" style="left:941.5px;top:154.5px;font-size:14.5px;color:#4a8fe0">100<span style="color:#c9c9c9">%</span></div>
<div class="t" style="left:884.5px;top:206px;font-size:14.5px;color:#4a8fe0">100<span style="color:#c9c9c9">%</span></div>
<div class="t" style="left:884.5px;top:180px;font-size:14.5px;color:#4a8fe0">0<span style="color:#c9c9c9">x</span>+0°</div>
</body></html>
